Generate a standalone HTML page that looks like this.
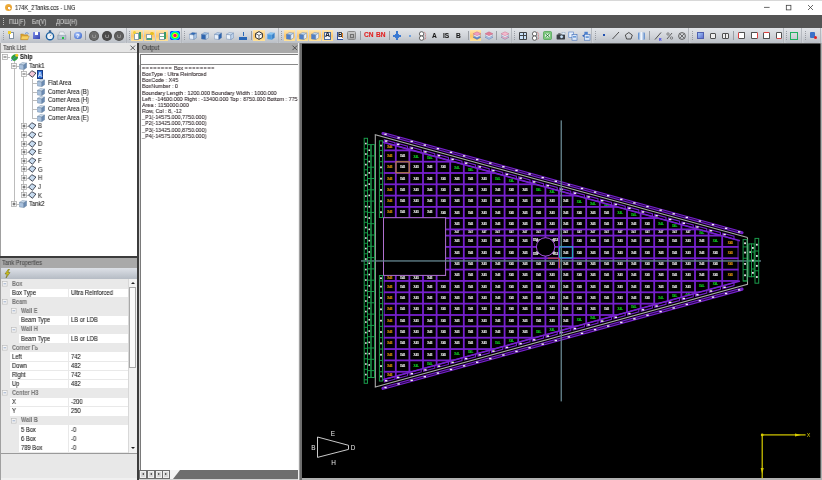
<!DOCTYPE html>
<html><head><meta charset="utf-8"><style>
html,body{margin:0;padding:0;}
body{width:822px;height:480px;overflow:hidden;position:relative;background:#f0f0f0;font-family:"Liberation Sans",sans-serif;}
.a{position:absolute;}
.t{position:absolute;white-space:nowrap;will-change:transform;-webkit-text-stroke:0.08px currentColor;font-size:5.6px;line-height:8px;color:#202020;}
#title{left:0;top:0;width:822px;height:15px;background:#fff;border-top:1px solid #d8d8d8;box-sizing:border-box;}
#menu{left:0;top:15px;width:822px;height:13px;background:#545454;}
#tbar{left:0;top:28px;width:822px;height:14.5px;background:linear-gradient(#e2e4e8,#c9cdd3);}
.tb{position:absolute;top:28px;height:14.5px;background:linear-gradient(#e6e8eb,#cbcfd5);border-radius:2px;}
.sep{position:absolute;top:31px;width:1px;height:9px;background:#a4a8ae;}
.grip{position:absolute;top:31px;width:1px;height:9px;background:repeating-linear-gradient(#70747a 0 1px,transparent 1px 2px);}
.hl{position:absolute;top:29.8px;height:11px;background:linear-gradient(#ffe2a8,#fbc86c 50%,#ffe6a0);border-radius:1px;}
.ic{position:absolute;}
</style></head><body>
<!-- title bar -->
<div id="title" class="a"></div>
<div class="a" style="left:4.5px;top:4px;width:7px;height:7px;border-radius:50%;background:radial-gradient(circle at 60% 60%,#fff 0 1.2px,#e8a030 1.5px,#f0b848);"></div>
<div class="t" style="left:14.6px;top:3.5px;font-size:7px;color:#262626;transform:scaleX(0.8);transform-origin:0 0;-webkit-text-stroke:0.1px #262626;">174K_2Tanks.ccs - LNG</div>
<svg class="a" style="left:760px;top:2px" width="60" height="11"><line x1="4" y1="5.4" x2="9.6" y2="5.4" stroke="#383838" stroke-width="0.75"/><rect x="26.3" y="3.3" width="4.6" height="4.6" fill="none" stroke="#383838" stroke-width="0.75"/><line x1="48" y1="3" x2="53" y2="8" stroke="#383838" stroke-width="0.75"/><line x1="53" y1="3" x2="48" y2="8" stroke="#383838" stroke-width="0.75"/></svg>
<!-- menu bar -->
<div id="menu" class="a"></div>
<div class="a" style="left:3px;top:18px;width:1px;height:8px;background:repeating-linear-gradient(#bdbdbd 0 1px,transparent 1px 2px);"></div>
<div class="t" style="left:8.5px;top:18.2px;color:#d4d4d4;font-size:6.4px;transform:scaleX(0.88);transform-origin:0 0;">&#x41F;&#x428;(F)</div>
<div class="t" style="left:32px;top:18.2px;color:#d4d4d4;font-size:6.4px;transform:scaleX(0.88);transform-origin:0 0;">&#x411;&#x43B;(V)</div>
<div class="t" style="left:56px;top:18.2px;color:#d4d4d4;font-size:6.4px;transform:scaleX(0.88);transform-origin:0 0;">&#x414;&#x41E;&#x428;(H)</div>
<!-- toolbar -->
<div id="tbar" class="a"></div>
<div class="a" style="left:1px;top:28px;width:124.8px;height:14.5px;background:linear-gradient(#e2e5e9,#d2d5da 50%,#babfc6);border-radius:2px;"></div>
<div class="a" style="left:125.7px;top:28px;width:0.8px;height:14.5px;background:#b4b8be;"></div>
<div class="a" style="left:2.7px;top:31px;width:1px;height:9px;background:repeating-linear-gradient(#868a92 0 1px,transparent 1px 2px);opacity:0.75;"></div>
<div class="a" style="left:127px;top:28px;width:53.7px;height:14.5px;background:linear-gradient(#e2e5e9,#d2d5da 50%,#babfc6);border-radius:2px;"></div>
<div class="a" style="left:180.6px;top:28px;width:0.8px;height:14.5px;background:#b4b8be;"></div>
<div class="a" style="left:128.7px;top:31px;width:1px;height:9px;background:repeating-linear-gradient(#868a92 0 1px,transparent 1px 2px);opacity:0.75;"></div>
<div class="a" style="left:182px;top:28px;width:95.7px;height:14.5px;background:linear-gradient(#e2e5e9,#d2d5da 50%,#babfc6);border-radius:2px;"></div>
<div class="a" style="left:277.6px;top:28px;width:0.8px;height:14.5px;background:#b4b8be;"></div>
<div class="a" style="left:183.7px;top:31px;width:1px;height:9px;background:repeating-linear-gradient(#868a92 0 1px,transparent 1px 2px);opacity:0.75;"></div>
<div class="a" style="left:279px;top:28px;width:231.8px;height:14.5px;background:linear-gradient(#e2e5e9,#d2d5da 50%,#babfc6);border-radius:2px;"></div>
<div class="a" style="left:510.7px;top:28px;width:0.8px;height:14.5px;background:#b4b8be;"></div>
<div class="a" style="left:280.7px;top:31px;width:1px;height:9px;background:repeating-linear-gradient(#868a92 0 1px,transparent 1px 2px);opacity:0.75;"></div>
<div class="a" style="left:512px;top:28px;width:79.5px;height:14.5px;background:linear-gradient(#e2e5e9,#d2d5da 50%,#babfc6);border-radius:2px;"></div>
<div class="a" style="left:591.4px;top:28px;width:0.8px;height:14.5px;background:#b4b8be;"></div>
<div class="a" style="left:513.7px;top:31px;width:1px;height:9px;background:repeating-linear-gradient(#868a92 0 1px,transparent 1px 2px);opacity:0.75;"></div>
<div class="a" style="left:593px;top:28px;width:95.5px;height:14.5px;background:linear-gradient(#e2e5e9,#d2d5da 50%,#babfc6);border-radius:2px;"></div>
<div class="a" style="left:688.4px;top:28px;width:0.8px;height:14.5px;background:#b4b8be;"></div>
<div class="a" style="left:594.7px;top:31px;width:1px;height:9px;background:repeating-linear-gradient(#868a92 0 1px,transparent 1px 2px);opacity:0.75;"></div>
<div class="a" style="left:690px;top:28px;width:93.2px;height:14.5px;background:linear-gradient(#e2e5e9,#d2d5da 50%,#babfc6);border-radius:2px;"></div>
<div class="a" style="left:783.1px;top:28px;width:0.8px;height:14.5px;background:#b4b8be;"></div>
<div class="a" style="left:691.7px;top:31px;width:1px;height:9px;background:repeating-linear-gradient(#868a92 0 1px,transparent 1px 2px);opacity:0.75;"></div>
<div class="a" style="left:784.5px;top:28px;width:17px;height:14.5px;background:linear-gradient(#e2e5e9,#d2d5da 50%,#babfc6);border-radius:2px;"></div>
<div class="a" style="left:801.4px;top:28px;width:0.8px;height:14.5px;background:#b4b8be;"></div>
<div class="a" style="left:786.2px;top:31px;width:1px;height:9px;background:repeating-linear-gradient(#868a92 0 1px,transparent 1px 2px);opacity:0.75;"></div>
<div class="a" style="left:803px;top:28px;width:17px;height:14.5px;background:linear-gradient(#e2e5e9,#d2d5da 50%,#babfc6);border-radius:2px;"></div>
<div class="a" style="left:819.9px;top:28px;width:0.8px;height:14.5px;background:#b4b8be;"></div>
<div class="a" style="left:804.7px;top:31px;width:1px;height:9px;background:repeating-linear-gradient(#868a92 0 1px,transparent 1px 2px);opacity:0.75;"></div>
<div class="a" style="left:69.7px;top:31px;width:0.8px;height:9px;background:#9a9ea4;"></div>
<div class="a" style="left:85.4px;top:31px;width:0.8px;height:9px;background:#9a9ea4;"></div>
<div class="a" style="left:250.5px;top:31px;width:0.8px;height:9px;background:#9a9ea4;"></div>
<div class="a" style="left:359.5px;top:31px;width:0.8px;height:9px;background:#9a9ea4;"></div>
<div class="a" style="left:388.7px;top:31px;width:0.8px;height:9px;background:#9a9ea4;"></div>
<div class="a" style="left:467.5px;top:31px;width:0.8px;height:9px;background:#9a9ea4;"></div>
<div class="a" style="left:495.7px;top:31px;width:0.8px;height:9px;background:#9a9ea4;"></div>
<div class="a" style="left:649px;top:31px;width:0.8px;height:9px;background:#9a9ea4;"></div>
<div class="a" style="left:733px;top:31px;width:0.8px;height:9px;background:#9a9ea4;"></div>
<div class="a" style="left:131.3px;top:29.8px;width:11.7px;height:11px;background:linear-gradient(#ffe7b0,#fcc66a 55%,#ffe49c);"></div>
<div class="a" style="left:143.5px;top:29.8px;width:11.5px;height:11px;background:linear-gradient(#ffe7b0,#fcc66a 55%,#ffe49c);"></div>
<div class="a" style="left:156px;top:29.8px;width:11.7px;height:11px;background:linear-gradient(#ffe7b0,#fcc66a 55%,#ffe49c);"></div>
<div class="a" style="left:253px;top:29.8px;width:12px;height:11px;background:linear-gradient(#ffe7b0,#fcc66a 55%,#ffe49c);"></div>
<div class="a" style="left:284px;top:29.8px;width:11px;height:11px;background:linear-gradient(#ffe7b0,#fcc66a 55%,#ffe49c);"></div>
<div class="a" style="left:296.5px;top:29.8px;width:11.5px;height:11px;background:linear-gradient(#ffe7b0,#fcc66a 55%,#ffe49c);"></div>
<div class="a" style="left:309px;top:29.8px;width:11.5px;height:11px;background:linear-gradient(#ffe7b0,#fcc66a 55%,#ffe49c);"></div>
<div class="a" style="left:321.5px;top:29.8px;width:11.5px;height:11px;background:linear-gradient(#ffe7b0,#fcc66a 55%,#ffe49c);"></div>
<div class="a" style="left:470px;top:29.8px;width:11px;height:11px;background:linear-gradient(#ffe7b0,#fcc66a 55%,#ffe49c);"></div>
<div class="a" style="left:8.5px;top:31.5px;width:5.5px;height:7px;background:#fff;border:0.6px solid #8090a0;box-sizing:border-box;"></div>
<div class="a" style="left:8px;top:31px;width:3px;height:3px;background:#f0d030;"></div>
<svg class="a" style="left:19.5px;top:30.5px" width="10" height="10" viewBox="0 0 10 10"><path d="M0.8 3 L3.2 3 L4 3.8 L7.6 3.8 L7.6 8.6 L0.8 8.6 Z" fill="#e0a830" stroke="#a07020" stroke-width="0.4"/><path d="M1.6 5 L9.2 5 L7.8 8.6 L0.8 8.6 Z" fill="#f8d060" stroke="#b88020" stroke-width="0.4"/><path d="M5 2.6 Q7 0.6 8.6 2.6" fill="none" stroke="#3a7ad0" stroke-width="0.7"/></svg>
<div class="a" style="left:33px;top:31.5px;width:7px;height:7px;background:linear-gradient(135deg,#8090e8,#3040b0);border-radius:0.5px;"></div>
<div class="a" style="left:35px;top:32px;width:3px;height:2.5px;background:#fff;"></div>
<svg class="a" style="left:44.5px;top:30px" width="10" height="11" viewBox="0 0 10 11"><rect x="3.8" y="0.4" width="2.4" height="1.4" fill="#1a4a80"/><circle cx="5" cy="6.2" r="3.6" fill="#f0f4f8" stroke="#1a5fa0" stroke-width="1.4"/><line x1="5" y1="6.2" x2="6.4" y2="4.6" stroke="#404040" stroke-width="0.5"/></svg>
<svg class="a" style="left:56.5px;top:30.5px" width="10" height="10" viewBox="0 0 10 10"><path d="M2.5 1 L7 1 L7.5 4 L2 4 Z" fill="#f4f6f8" stroke="#8090a0" stroke-width="0.4"/><path d="M0.8 4 L8.8 4 L8.8 8.4 L0.8 8.4 Z" fill="#b8c4d0" stroke="#708090" stroke-width="0.4"/><path d="M2 4 L7.5 4 L8.5 2.8 L3 2.8 Z" fill="#e0e6ec"/></svg>
<div class="a" style="left:62px;top:36.5px;width:2px;height:2px;background:#20c040;"></div>
<div class="a" style="left:74px;top:31.5px;width:7.5px;height:7.5px;background:radial-gradient(circle at 40% 35%,#b8d0ff,#2050c0);border-radius:50%;"></div>
<div class="t" style="left:75.9px;top:31.6px;font-size:6px;font-weight:bold;color:#fff;-webkit-text-stroke:0;">?</div>
<div class="a" style="left:89px;top:30.5px;width:10px;height:10px;background:radial-gradient(circle,#6a6a6a 0 55%,#3a3a3a 75%,#6a6a6a);border-radius:50%;"></div>
<div class="a" style="left:92px;top:33.5px;width:4px;height:4px;border:1px solid #9a9a9a;border-radius:50%;border-top-color:transparent;box-sizing:border-box;"></div>
<div class="a" style="left:102px;top:30.5px;width:10px;height:10px;background:radial-gradient(circle,#4a4a4a 0 55%,#3a3a3a 75%,#6a6a6a);border-radius:50%;"></div>
<div class="a" style="left:105px;top:33.5px;width:4px;height:4px;border:1px solid #9a9a9a;border-radius:50%;border-top-color:transparent;box-sizing:border-box;"></div>
<div class="a" style="left:114px;top:30.5px;width:10px;height:10px;background:radial-gradient(circle,#5e5e5e 0 55%,#3a3a3a 75%,#6a6a6a);border-radius:50%;"></div>
<div class="a" style="left:117px;top:33.5px;width:4px;height:4px;border:1px solid #9a9a9a;border-radius:50%;border-top-color:transparent;box-sizing:border-box;"></div>
<div class="a" style="left:134px;top:32.5px;width:5px;height:7px;background:#fff;border:0.5px solid #90a0a8;box-sizing:border-box;"></div>
<div class="a" style="left:138.5px;top:32px;width:2px;height:7px;background:#3a9a6a;"></div>
<div class="a" style="left:133px;top:31px;width:3px;height:3px;background:#f4d030;border-radius:50%;"></div>
<div class="a" style="left:146px;top:34px;width:6px;height:5.5px;background:#fff;border:0.5px solid #90a0a8;box-sizing:border-box;"></div>
<div class="a" style="left:146.5px;top:38px;width:5px;height:1.5px;background:#50a080;"></div>
<div class="a" style="left:150px;top:31.5px;width:4px;height:3.5px;background:#e8c020;border-radius:50%;"></div>
<div class="a" style="left:159px;top:32.5px;width:6px;height:7px;background:#fff;border:0.5px solid #90a0a8;box-sizing:border-box;"></div>
<div class="a" style="left:164px;top:32px;width:2px;height:7px;background:#3a9a6a;"></div>
<div class="a" style="left:159.5px;top:35.5px;width:4px;height:1px;background:#70b090;"></div>
<div class="a" style="left:169.5px;top:30.5px;width:10px;height:9.5px;background:radial-gradient(ellipse at 50% 50%,#ff0080 0 18%,#ffff00 30%,#00ff40 45%,#00e0ff 62%,#0020ff 78%);border-radius:2px;"></div>
<svg class="a" style="left:188.5px;top:31.5px" width="8" height="8" viewBox="0 0 8 8"><polygon points="0.4,2.4 3.4,0.5 7.6,1.1 4.8,3.0" fill="#2f6ab8" stroke="#5a7ca8" stroke-width="0.4"/><polygon points="0.4,2.4 4.8,3.0 4.8,7.6 0.4,6.9" fill="#e8f0fa" stroke="#5a7ca8" stroke-width="0.4"/><polygon points="4.8,3.0 7.6,1.1 7.6,5.8 4.8,7.6" fill="#a8c4e4" stroke="#5a7ca8" stroke-width="0.4"/></svg>
<svg class="a" style="left:201px;top:31.5px" width="8" height="8" viewBox="0 0 8 8"><polygon points="0.4,2.4 3.4,0.5 7.6,1.1 4.8,3.0" fill="#9cc0e8" stroke="#5a7ca8" stroke-width="0.4"/><polygon points="0.4,2.4 4.8,3.0 4.8,7.6 0.4,6.9" fill="#2c64b0" stroke="#5a7ca8" stroke-width="0.4"/><polygon points="4.8,3.0 7.6,1.1 7.6,5.8 4.8,7.6" fill="#c8dcf0" stroke="#5a7ca8" stroke-width="0.4"/></svg>
<svg class="a" style="left:213.5px;top:31.5px" width="8" height="8" viewBox="0 0 8 8"><polygon points="0.4,2.4 3.4,0.5 7.6,1.1 4.8,3.0" fill="#b8d0ec" stroke="#5a7ca8" stroke-width="0.4"/><polygon points="0.4,2.4 4.8,3.0 4.8,7.6 0.4,6.9" fill="#e8f0fa" stroke="#5a7ca8" stroke-width="0.4"/><polygon points="4.8,3.0 7.6,1.1 7.6,5.8 4.8,7.6" fill="#2c64b0" stroke="#5a7ca8" stroke-width="0.4"/></svg>
<svg class="a" style="left:226px;top:31.5px" width="8" height="8" viewBox="0 0 8 8"><polygon points="0.4,2.4 3.4,0.5 7.6,1.1 4.8,3.0" fill="#d0e0f2" stroke="#5a7ca8" stroke-width="0.4"/><polygon points="0.4,2.4 4.8,3.0 4.8,7.6 0.4,6.9" fill="#eef4fb" stroke="#5a7ca8" stroke-width="0.4"/><polygon points="4.8,3.0 7.6,1.1 7.6,5.8 4.8,7.6" fill="#c0d4ec" stroke="#5a7ca8" stroke-width="0.4"/></svg>
<div class="a" style="left:239px;top:31.5px;width:8px;height:8px;background:linear-gradient(transparent 0 60%,#2a68b8 60%);"></div>
<div class="a" style="left:242.5px;top:31.5px;width:1px;height:4px;background:#2a68b8;"></div>
<svg class="a" style="left:255px;top:31px" width="8" height="9" viewBox="0 0 8 9"><polygon points="4,0.6 7.4,2.5 7.4,6.5 4,8.4 0.6,6.5 0.6,2.5" fill="#fff" stroke="#303030" stroke-width="1"/><polyline points="0.8,2.6 4,4.4 7.2,2.6" fill="none" stroke="#303030" stroke-width="0.7"/><line x1="4" y1="4.4" x2="4" y2="8.2" stroke="#303030" stroke-width="0.7"/></svg>
<svg class="a" style="left:267px;top:31.5px" width="8" height="8" viewBox="0 0 8 8"><polygon points="0.4,2.4 3.4,0.5 7.6,1.1 4.8,3.0" fill="#8cc8f4" stroke="#6aa8e0" stroke-width="0.4"/><polygon points="0.4,2.4 4.8,3.0 4.8,7.6 0.4,6.9" fill="#4a9ae0" stroke="#6aa8e0" stroke-width="0.4"/><polygon points="4.8,3.0 7.6,1.1 7.6,5.8 4.8,7.6" fill="#3a80c8" stroke="#6aa8e0" stroke-width="0.4"/></svg>
<svg class="a" style="left:286px;top:31.5px" width="8" height="8" viewBox="0 0 8 8"><polygon points="0.4,2.4 3.4,0.5 7.6,1.1 4.8,3.0" fill="#c0d8f0" stroke="#5a7ca8" stroke-width="0.4"/><polygon points="0.4,2.4 4.8,3.0 4.8,7.6 0.4,6.9" fill="#5080c8" stroke="#5a7ca8" stroke-width="0.4"/><polygon points="4.8,3.0 7.6,1.1 7.6,5.8 4.8,7.6" fill="#e8f0fa" stroke="#5a7ca8" stroke-width="0.4"/></svg>
<svg class="a" style="left:298.5px;top:31.5px" width="8" height="8" viewBox="0 0 8 8"><polygon points="0.4,2.4 3.4,0.5 7.6,1.1 4.8,3.0" fill="#c0d8f0" stroke="#5a7ca8" stroke-width="0.4"/><polygon points="0.4,2.4 4.8,3.0 4.8,7.6 0.4,6.9" fill="#5080c8" stroke="#5a7ca8" stroke-width="0.4"/><polygon points="4.8,3.0 7.6,1.1 7.6,5.8 4.8,7.6" fill="#e8f0fa" stroke="#5a7ca8" stroke-width="0.4"/></svg>
<svg class="a" style="left:311px;top:31.5px" width="8" height="8" viewBox="0 0 8 8"><polygon points="0.4,2.4 3.4,0.5 7.6,1.1 4.8,3.0" fill="#c0d8f0" stroke="#5a7ca8" stroke-width="0.4"/><polygon points="0.4,2.4 4.8,3.0 4.8,7.6 0.4,6.9" fill="#5080c8" stroke="#5a7ca8" stroke-width="0.4"/><polygon points="4.8,3.0 7.6,1.1 7.6,5.8 4.8,7.6" fill="#e8f0fa" stroke="#5a7ca8" stroke-width="0.4"/></svg>
<div class="a" style="left:323.5px;top:31.5px;width:7.5px;height:8px;background:#f0f4fa;border:0.7px solid #5070a0;box-sizing:border-box;"></div>
<div class="t" style="left:324.6px;top:31px;font-size:7px;font-weight:bold;color:#202838;">A</div>
<div class="a" style="left:336.5px;top:32px;width:6.5px;height:8px;background:#f4f6fa;border-left:0.8px solid #3050a0;border-bottom:0.8px solid #3050a0;box-sizing:border-box;"></div>
<div class="t" style="left:337.6px;top:31.2px;font-size:6.5px;font-weight:bold;color:#181818;">B</div>
<div class="a" style="left:341.5px;top:33px;width:1.2px;height:5px;background:#e08020;"></div>
<div class="a" style="left:347px;top:31px;width:9px;height:9px;background:linear-gradient(#c8c8c8,#a8a8a8);border:0.8px solid #8a8a8a;border-radius:1.5px;box-sizing:border-box;"></div>
<div class="a" style="left:349.5px;top:33.5px;width:4px;height:4px;border:0.6px solid #707070;box-sizing:border-box;"></div>
<div class="t" style="left:364px;top:31.3px;font-size:6.6px;font-weight:bold;color:#e02020;">CN</div>
<div class="t" style="left:376px;top:31.3px;font-size:6.6px;font-weight:bold;color:#e02020;">BN</div>
<div class="a" style="left:393px;top:31.5px;width:8px;height:8px;background:radial-gradient(circle,#3a80e0 0 40%,transparent 45%);"></div>
<div class="a" style="left:396px;top:31px;width:2px;height:9px;background:#3a78d0;"></div>
<div class="a" style="left:393px;top:35px;width:8px;height:2px;background:#3a78d0;"></div>
<div class="a" style="left:408.5px;top:34.8px;width:2px;height:2px;background:#5090e0;border-radius:50%;"></div>
<svg class="a" style="left:417.5px;top:30.5px" width="10" height="10" viewBox="0 0 10 10"><circle cx="3.6" cy="2.9" r="2.2" fill="#fff" stroke="#404040" stroke-width="0.8"/><circle cx="3.6" cy="7.1" r="2.2" fill="#fff" stroke="#404040" stroke-width="0.8"/><path d="M6.4 1.2 Q8.6 3 7 5 Q8.6 7 6.4 8.8" fill="none" stroke="#d04848" stroke-width="0.7" stroke-dasharray="1 0.6"/></svg>
<div class="t" style="left:431.8px;top:31.7px;font-size:6.6px;font-weight:bold;color:#181818;">A</div>
<div class="t" style="left:443.3px;top:31.7px;font-size:6.6px;font-weight:bold;color:#181818;">IS</div>
<div class="t" style="left:455.8px;top:31.7px;font-size:6.6px;font-weight:bold;color:#181818;">B</div>
<svg class="a" style="left:471.5px;top:30.5px" width="10" height="10" viewBox="0 0 10 10"><polygon points="1,6.2 5,4.2 9,6.2 5,8.4" fill="#5a8ad0" stroke="#5070a0" stroke-width="0.4"/><polygon points="1,4.4 5,2.4 9,4.4 5,6.5" fill="#e8eef8" stroke="#8090b0" stroke-width="0.4"/><polygon points="1,2.8 5,0.8 9,2.8 5,4.8" fill="#f0a0c0" stroke="#c06080" stroke-width="0.4"/></svg>
<svg class="a" style="left:483.5px;top:30.5px" width="10" height="10" viewBox="0 0 10 10"><polygon points="1,6.2 5,4.2 9,6.2 5,8.4" fill="#a8c0e8" stroke="#5070a0" stroke-width="0.4"/><polygon points="1,4.4 5,2.4 9,4.4 5,6.5" fill="#e8eef8" stroke="#8090b0" stroke-width="0.4"/><polygon points="1,2.8 5,0.8 9,2.8 5,4.8" fill="#e08098" stroke="#c06080" stroke-width="0.4"/></svg>
<svg class="a" style="left:500px;top:30.5px" width="10" height="10" viewBox="0 0 10 10"><polygon points="1,6.2 5,4.2 9,6.2 5,8.4" fill="#f0a8c0" stroke="#5070a0" stroke-width="0.4"/><polygon points="1,4.4 5,2.4 9,4.4 5,6.5" fill="#e8eef8" stroke="#8090b0" stroke-width="0.4"/><polygon points="1,2.8 5,0.8 9,2.8 5,4.8" fill="#f4b8cc" stroke="#c06080" stroke-width="0.4"/></svg>
<div class="a" style="left:519px;top:31.5px;width:8px;height:8px;background:#404448;border-radius:1px;"></div>
<div class="a" style="left:520px;top:32.5px;width:2.5px;height:2.5px;background:#c8e0f8;"></div>
<div class="a" style="left:523.5px;top:32.5px;width:2.5px;height:2.5px;background:#c8e0f8;"></div>
<div class="a" style="left:520px;top:36px;width:2.5px;height:2.5px;background:#c8e0f8;"></div>
<div class="a" style="left:523.5px;top:36px;width:2.5px;height:2.5px;background:#c8e0f8;"></div>
<svg class="a" style="left:531px;top:30.5px" width="10" height="10" viewBox="0 0 10 10"><circle cx="3.6" cy="2.9" r="2.2" fill="#fff" stroke="#404040" stroke-width="0.8"/><circle cx="3.6" cy="7.1" r="2.2" fill="#fff" stroke="#404040" stroke-width="0.8"/><path d="M6.4 1.2 Q8.6 3 7 5 Q8.6 7 6.4 8.8" fill="none" stroke="#d04848" stroke-width="0.7" stroke-dasharray="1 0.6"/></svg>
<svg class="a" style="left:543px;top:31px" width="9" height="9" viewBox="0 0 9 9"><rect x="0.5" y="0.5" width="8" height="8" rx="1" fill="#7cc87c" stroke="#3a9a40" stroke-width="0.6"/><rect x="2" y="2.6" width="5" height="3.8" fill="#e8f4e8"/><path d="M2.4 2.8 L6.6 6.2 M6.6 2.8 L2.4 6.2" stroke="#1a7a2a" stroke-width="0.9"/></svg>
<svg class="a" style="left:555.5px;top:30.5px" width="10" height="10" viewBox="0 0 10 10"><rect x="0.6" y="3.4" width="8.4" height="5" rx="0.6" fill="#3a3e44"/><rect x="2.2" y="2.4" width="2.4" height="1.2" fill="#3a3e44"/><circle cx="5.6" cy="5.8" r="1.8" fill="#c8e0f8" stroke="#202428" stroke-width="0.5"/><rect x="6" y="1.2" width="3" height="2.2" fill="#e8f0f8" stroke="#6080a0" stroke-width="0.3"/></svg>
<svg class="a" style="left:567.5px;top:30.5px" width="10" height="10" viewBox="0 0 10 10"><rect x="0.8" y="1" width="4.6" height="5.6" fill="#e8f0fa" stroke="#4a7ac8" stroke-width="0.6"/><rect x="4" y="3.6" width="5" height="5.6" fill="#dce8f8" stroke="#3a6ab8" stroke-width="0.6"/><rect x="5" y="5" width="3" height="1.6" fill="#6a9ad8"/></svg>
<svg class="a" style="left:580.5px;top:30.5px" width="10" height="10" viewBox="0 0 10 10"><rect x="3.4" y="0.8" width="3.4" height="2.6" fill="#4a80d0"/><path d="M1 4.8 L3.6 3.2 L3.6 6.4 Z" fill="#2a60c0"/><rect x="3.4" y="3.4" width="5.6" height="5.8" fill="#dce8f8" stroke="#3a6ab8" stroke-width="0.6"/><rect x="4.6" y="5.2" width="3.2" height="1.8" fill="#6a9ad8"/></svg>
<div class="a" style="left:603px;top:34.3px;width:1.5px;height:1.5px;background:#2050b0;"></div>
<svg class="a" style="left:610px;top:30px" width="80" height="12"><line x1="2.5" y1="9" x2="9" y2="2" stroke="#404040" stroke-width="0.9"/><polygon points="18.8,2.5 22.3,5 21,9 16.6,9 15.3,5" fill="none" stroke="#404040" stroke-width="0.9"/><line x1="45" y1="9.5" x2="51" y2="2.5" stroke="#404040" stroke-width="0.9"/><text x="49" y="10.5" font-size="3.6" font-family="Liberation Sans" font-weight="bold" fill="#3030f0">R</text><line x1="57" y1="9" x2="62" y2="3" stroke="#505050" stroke-width="0.9"/><circle cx="58" cy="4" r="1.2" fill="none" stroke="#505050" stroke-width="0.6"/><circle cx="61.5" cy="8" r="1.2" fill="none" stroke="#505050" stroke-width="0.6"/><circle cx="72" cy="6" r="3.4" fill="none" stroke="#505050" stroke-width="0.9"/><line x1="69.8" y1="3.8" x2="74.2" y2="8.2" stroke="#505050" stroke-width="0.8"/><line x1="74.2" y1="3.8" x2="69.8" y2="8.2" stroke="#505050" stroke-width="0.8"/></svg>
<div class="a" style="left:637.5px;top:31.5px;width:7.5px;height:8px;background:linear-gradient(90deg,#4a80c8,#fff 45%,#5a88c8);border-radius:3px/1.5px;"></div>
<div class="a" style="left:696.5px;top:32px;width:7px;height:7px;background:linear-gradient(135deg,#a0c8f8,#6070d0);border:0.6px solid #5060b0;box-sizing:border-box;"></div>
<div class="a" style="left:709.5px;top:32.5px;width:6.5px;height:6.5px;border:0.9px solid #505050;background:linear-gradient(#eee 0 45%,#505050 45% 55%,#eee 55%);box-sizing:border-box;border-radius:1px;"></div>
<div class="a" style="left:722px;top:32.5px;width:6.5px;height:6.5px;border:0.9px solid #505050;background:linear-gradient(90deg,#eee 0 45%,#505050 45% 55%,#eee 55%);box-sizing:border-box;border-radius:1px;"></div>
<div class="a" style="left:738px;top:32.3px;width:6.8px;height:6.8px;border:0.9px solid #505050;border-left:1.2px solid #e04040;background:#fff;box-sizing:border-box;border-radius:1.2px;"></div>
<div class="a" style="left:751px;top:32.3px;width:6.8px;height:6.8px;border:0.9px solid #505050;border-right:1.2px solid #e04040;background:#fff;box-sizing:border-box;border-radius:1.2px;"></div>
<div class="a" style="left:763px;top:32.3px;width:6.8px;height:6.8px;border:0.9px solid #505050;border-top:1.2px solid #e04040;background:#fff;box-sizing:border-box;border-radius:1.2px;"></div>
<div class="a" style="left:775.5px;top:32.3px;width:6.8px;height:6.8px;border:0.9px solid #505050;border-bottom:1.2px solid #e04040;background:#fff;box-sizing:border-box;border-radius:1.2px;"></div>
<div class="a" style="left:790px;top:31.5px;width:8px;height:8px;border:1.4px solid #20b060;background:transparent;box-sizing:border-box;"></div>
<div class="a" style="left:810px;top:31.5px;width:5px;height:6px;background:#3a70c8;border-radius:1px;"></div>
<div class="a" style="left:813.5px;top:35.5px;width:3.5px;height:3.5px;background:#e02020;border-radius:50%;"></div>

<!-- separator below toolbar -->
<div class="a" style="left:0;top:42.5px;width:822px;height:1px;background:#d0d0d0;"></div>

<!-- LEFT PANEL: Tank List -->
<div class="a" style="left:0;top:43px;width:137px;height:437px;background:#f0f0f0;"></div>
<div class="a" style="left:0;top:43px;width:1px;height:437px;background:#a0a0a0;"></div>
<div class="a" style="left:1px;top:43px;width:136px;height:9.5px;background:#e6e6e6;border-bottom:1px solid #b8b8b8;box-sizing:border-box;"></div>
<div class="t" style="left:2.5px;top:44px;color:#383838;font-size:6.4px;transform:scaleX(0.9);transform-origin:0 0;">Tank List</div>
<svg class="a" style="left:128.5px;top:44px" width="8" height="8"><line x1="1.5" y1="1.6" x2="6" y2="6.1" stroke="#3a3a3a" stroke-width="0.8"/><line x1="6" y1="1.6" x2="1.5" y2="6.1" stroke="#3a3a3a" stroke-width="0.8"/></svg>
<div class="a" style="left:1px;top:52.5px;width:136px;height:203.5px;background:#fff;"></div>
<div class="a" style="left:14.3px;top:61px;width:0.7px;height:143px;background:#bcbcbc;"></div>
<div class="a" style="left:23.3px;top:70px;width:0.7px;height:125.5px;background:#bcbcbc;"></div>
<div class="a" style="left:32.4px;top:79px;width:0.7px;height:38.5px;background:#bcbcbc;"></div>
<div class="a" style="left:5.2px;top:57px;width:5px;height:0.7px;background:#bcbcbc;"></div>
<svg class="a" style="left:2.2px;top:54px" width="6" height="6" viewBox="0 0 6 6"><rect x="0.5" y="0.5" width="5" height="5" fill="#fafafa" stroke="#a4a4a4" stroke-width="0.7"/><line x1="1.5" y1="3" x2="4.5" y2="3" stroke="#303030" stroke-width="0.8"/></svg>
<svg class="a" style="left:9.5px;top:52.5px" width="9" height="9" viewBox="0 0 9 9"><ellipse cx="4.6" cy="4.6" rx="3.4" ry="3" transform="rotate(-35 4.6 4.6)" fill="#2aa040"/><path d="M1 7.8 Q4 6 8 1.2" stroke="#4a7ad0" stroke-width="0.8" fill="none"/><circle cx="6.8" cy="2.2" r="1.5" fill="#f0c820"/></svg>
<div class="t" style="left:19.8px;top:53.2px;font-weight:bold;font-size:6.6px;color:#181818;transform:scaleX(0.88);transform-origin:0 0;">Ship</div>
<div class="a" style="left:14.4px;top:65.65px;width:5px;height:0.7px;background:#bcbcbc;"></div>
<svg class="a" style="left:11.4px;top:62.65px" width="6" height="6" viewBox="0 0 6 6"><rect x="0.5" y="0.5" width="5" height="5" fill="#fafafa" stroke="#a4a4a4" stroke-width="0.7"/><line x1="1.5" y1="3" x2="4.5" y2="3" stroke="#303030" stroke-width="0.8"/></svg>
<svg class="a" style="left:19.3px;top:61.85px" width="8" height="8" viewBox="0 0 8 8"><polygon points="0.4,2.4 3.4,0.5 7.6,1.1 4.8,3.0" fill="#c8d8ea" stroke="#5a7898" stroke-width="0.4"/><polygon points="0.4,2.4 4.8,3.0 4.8,7.6 0.4,6.9" fill="#a8c0dc" stroke="#5a7898" stroke-width="0.4"/><polygon points="4.8,3.0 7.6,1.1 7.6,5.8 4.8,7.6" fill="#6c8cb4" stroke="#5a7898" stroke-width="0.4"/></svg>
<div class="t" style="left:29px;top:61.85px;font-size:6.6px;color:#161616;transform:scaleX(0.88);transform-origin:0 0;">Tank1</div>
<div class="a" style="left:23.6px;top:74.3px;width:5px;height:0.7px;background:#bcbcbc;"></div>
<svg class="a" style="left:20.6px;top:71.3px" width="6" height="6" viewBox="0 0 6 6"><rect x="0.5" y="0.5" width="5" height="5" fill="#fafafa" stroke="#a4a4a4" stroke-width="0.7"/><line x1="1.5" y1="3" x2="4.5" y2="3" stroke="#303030" stroke-width="0.8"/></svg>
<svg class="a" style="left:28px;top:70.3px" width="8.5" height="8" viewBox="0 0 8.5 8"><polygon points="0.6,4.2 3.8,0.7 7.9,3 4.5,7.3" fill="#f4c8d8" stroke="#2a3040" stroke-width="0.85"/></svg>
<div class="a" style="left:37.3px;top:69.7px;width:6px;height:9.2px;background:#2f72dc;border:0.6px solid #1a3a80;box-sizing:border-box;"></div>
<div class="t" style="left:38.3px;top:70.5px;font-size:6.6px;color:#fff;transform:scaleX(0.88);transform-origin:0 0;">A</div>
<div class="a" style="left:32.4px;top:82.95px;width:4.5px;height:0.7px;background:#bcbcbc;"></div>
<svg class="a" style="left:37.2px;top:79.15px" width="8" height="8" viewBox="0 0 8 8"><polygon points="0.4,2.4 3.4,0.5 7.6,1.1 4.8,3.0" fill="#d0deee" stroke="#5a7898" stroke-width="0.4"/><polygon points="0.4,2.4 4.8,3.0 4.8,7.6 0.4,6.9" fill="#a8c0dc" stroke="#5a7898" stroke-width="0.4"/><polygon points="4.8,3.0 7.6,1.1 7.6,5.8 4.8,7.6" fill="#6c8cb4" stroke="#5a7898" stroke-width="0.4"/></svg>
<div class="t" style="left:47.6px;top:79.15px;font-size:6.6px;color:#161616;transform:scaleX(0.88);transform-origin:0 0;">Flat Area</div>
<div class="a" style="left:32.4px;top:91.6px;width:4.5px;height:0.7px;background:#bcbcbc;"></div>
<svg class="a" style="left:37.2px;top:87.8px" width="8" height="8" viewBox="0 0 8 8"><polygon points="0.4,2.4 3.4,0.5 7.6,1.1 4.8,3.0" fill="#d0deee" stroke="#5a7898" stroke-width="0.4"/><polygon points="0.4,2.4 4.8,3.0 4.8,7.6 0.4,6.9" fill="#a8c0dc" stroke="#5a7898" stroke-width="0.4"/><polygon points="4.8,3.0 7.6,1.1 7.6,5.8 4.8,7.6" fill="#6c8cb4" stroke="#5a7898" stroke-width="0.4"/></svg>
<div class="t" style="left:47.6px;top:87.8px;font-size:6.6px;color:#161616;transform:scaleX(0.88);transform-origin:0 0;">Corner Area (B)</div>
<div class="a" style="left:32.4px;top:100.25px;width:4.5px;height:0.7px;background:#bcbcbc;"></div>
<svg class="a" style="left:37.2px;top:96.45px" width="8" height="8" viewBox="0 0 8 8"><polygon points="0.4,2.4 3.4,0.5 7.6,1.1 4.8,3.0" fill="#d0deee" stroke="#5a7898" stroke-width="0.4"/><polygon points="0.4,2.4 4.8,3.0 4.8,7.6 0.4,6.9" fill="#a8c0dc" stroke="#5a7898" stroke-width="0.4"/><polygon points="4.8,3.0 7.6,1.1 7.6,5.8 4.8,7.6" fill="#6c8cb4" stroke="#5a7898" stroke-width="0.4"/></svg>
<div class="t" style="left:47.6px;top:96.45px;font-size:6.6px;color:#161616;transform:scaleX(0.88);transform-origin:0 0;">Corner Area (H)</div>
<div class="a" style="left:32.4px;top:108.9px;width:4.5px;height:0.7px;background:#bcbcbc;"></div>
<svg class="a" style="left:37.2px;top:105.1px" width="8" height="8" viewBox="0 0 8 8"><polygon points="0.4,2.4 3.4,0.5 7.6,1.1 4.8,3.0" fill="#d0deee" stroke="#5a7898" stroke-width="0.4"/><polygon points="0.4,2.4 4.8,3.0 4.8,7.6 0.4,6.9" fill="#a8c0dc" stroke="#5a7898" stroke-width="0.4"/><polygon points="4.8,3.0 7.6,1.1 7.6,5.8 4.8,7.6" fill="#6c8cb4" stroke="#5a7898" stroke-width="0.4"/></svg>
<div class="t" style="left:47.6px;top:105.1px;font-size:6.6px;color:#161616;transform:scaleX(0.88);transform-origin:0 0;">Corner Area (D)</div>
<div class="a" style="left:32.4px;top:117.55px;width:4.5px;height:0.7px;background:#bcbcbc;"></div>
<svg class="a" style="left:37.2px;top:113.75px" width="8" height="8" viewBox="0 0 8 8"><polygon points="0.4,2.4 3.4,0.5 7.6,1.1 4.8,3.0" fill="#d0deee" stroke="#5a7898" stroke-width="0.4"/><polygon points="0.4,2.4 4.8,3.0 4.8,7.6 0.4,6.9" fill="#a8c0dc" stroke="#5a7898" stroke-width="0.4"/><polygon points="4.8,3.0 7.6,1.1 7.6,5.8 4.8,7.6" fill="#6c8cb4" stroke="#5a7898" stroke-width="0.4"/></svg>
<div class="t" style="left:47.6px;top:113.75px;font-size:6.6px;color:#161616;transform:scaleX(0.88);transform-origin:0 0;">Corner Area (E)</div>
<div class="a" style="left:23.6px;top:126.2px;width:5px;height:0.7px;background:#bcbcbc;"></div>
<svg class="a" style="left:20.6px;top:123.2px" width="6" height="6" viewBox="0 0 6 6"><rect x="0.5" y="0.5" width="5" height="5" fill="#fafafa" stroke="#a4a4a4" stroke-width="0.7"/><line x1="1.5" y1="3" x2="4.5" y2="3" stroke="#303030" stroke-width="0.8"/><line x1="3" y1="1.5" x2="3" y2="4.5" stroke="#303030" stroke-width="0.8"/></svg>
<svg class="a" style="left:28px;top:122.2px" width="8.5" height="8" viewBox="0 0 8.5 8"><polygon points="0.6,4.2 3.8,0.7 7.9,3 4.5,7.3" fill="#c8dcf0" stroke="#2a3040" stroke-width="0.85"/></svg>
<div class="t" style="left:38px;top:122.4px;font-size:6.6px;color:#161616;transform:scaleX(0.88);transform-origin:0 0;">B</div>
<div class="a" style="left:23.6px;top:134.85px;width:5px;height:0.7px;background:#bcbcbc;"></div>
<svg class="a" style="left:20.6px;top:131.85px" width="6" height="6" viewBox="0 0 6 6"><rect x="0.5" y="0.5" width="5" height="5" fill="#fafafa" stroke="#a4a4a4" stroke-width="0.7"/><line x1="1.5" y1="3" x2="4.5" y2="3" stroke="#303030" stroke-width="0.8"/><line x1="3" y1="1.5" x2="3" y2="4.5" stroke="#303030" stroke-width="0.8"/></svg>
<svg class="a" style="left:28px;top:130.85px" width="8.5" height="8" viewBox="0 0 8.5 8"><polygon points="0.6,4.2 3.8,0.7 7.9,3 4.5,7.3" fill="#c8dcf0" stroke="#2a3040" stroke-width="0.85"/></svg>
<div class="t" style="left:38px;top:131.05px;font-size:6.6px;color:#161616;transform:scaleX(0.88);transform-origin:0 0;">C</div>
<div class="a" style="left:23.6px;top:143.5px;width:5px;height:0.7px;background:#bcbcbc;"></div>
<svg class="a" style="left:20.6px;top:140.5px" width="6" height="6" viewBox="0 0 6 6"><rect x="0.5" y="0.5" width="5" height="5" fill="#fafafa" stroke="#a4a4a4" stroke-width="0.7"/><line x1="1.5" y1="3" x2="4.5" y2="3" stroke="#303030" stroke-width="0.8"/><line x1="3" y1="1.5" x2="3" y2="4.5" stroke="#303030" stroke-width="0.8"/></svg>
<svg class="a" style="left:28px;top:139.5px" width="8.5" height="8" viewBox="0 0 8.5 8"><polygon points="0.6,4.2 3.8,0.7 7.9,3 4.5,7.3" fill="#c8dcf0" stroke="#2a3040" stroke-width="0.85"/></svg>
<div class="t" style="left:38px;top:139.7px;font-size:6.6px;color:#161616;transform:scaleX(0.88);transform-origin:0 0;">D</div>
<div class="a" style="left:23.6px;top:152.15px;width:5px;height:0.7px;background:#bcbcbc;"></div>
<svg class="a" style="left:20.6px;top:149.15px" width="6" height="6" viewBox="0 0 6 6"><rect x="0.5" y="0.5" width="5" height="5" fill="#fafafa" stroke="#a4a4a4" stroke-width="0.7"/><line x1="1.5" y1="3" x2="4.5" y2="3" stroke="#303030" stroke-width="0.8"/><line x1="3" y1="1.5" x2="3" y2="4.5" stroke="#303030" stroke-width="0.8"/></svg>
<svg class="a" style="left:28px;top:148.15px" width="8.5" height="8" viewBox="0 0 8.5 8"><polygon points="0.6,4.2 3.8,0.7 7.9,3 4.5,7.3" fill="#c8dcf0" stroke="#2a3040" stroke-width="0.85"/></svg>
<div class="t" style="left:38px;top:148.35px;font-size:6.6px;color:#161616;transform:scaleX(0.88);transform-origin:0 0;">E</div>
<div class="a" style="left:23.6px;top:160.8px;width:5px;height:0.7px;background:#bcbcbc;"></div>
<svg class="a" style="left:20.6px;top:157.8px" width="6" height="6" viewBox="0 0 6 6"><rect x="0.5" y="0.5" width="5" height="5" fill="#fafafa" stroke="#a4a4a4" stroke-width="0.7"/><line x1="1.5" y1="3" x2="4.5" y2="3" stroke="#303030" stroke-width="0.8"/><line x1="3" y1="1.5" x2="3" y2="4.5" stroke="#303030" stroke-width="0.8"/></svg>
<svg class="a" style="left:28px;top:156.8px" width="8.5" height="8" viewBox="0 0 8.5 8"><polygon points="0.6,4.2 3.8,0.7 7.9,3 4.5,7.3" fill="#c8dcf0" stroke="#2a3040" stroke-width="0.85"/></svg>
<div class="t" style="left:38px;top:157px;font-size:6.6px;color:#161616;transform:scaleX(0.88);transform-origin:0 0;">F</div>
<div class="a" style="left:23.6px;top:169.45px;width:5px;height:0.7px;background:#bcbcbc;"></div>
<svg class="a" style="left:20.6px;top:166.45px" width="6" height="6" viewBox="0 0 6 6"><rect x="0.5" y="0.5" width="5" height="5" fill="#fafafa" stroke="#a4a4a4" stroke-width="0.7"/><line x1="1.5" y1="3" x2="4.5" y2="3" stroke="#303030" stroke-width="0.8"/><line x1="3" y1="1.5" x2="3" y2="4.5" stroke="#303030" stroke-width="0.8"/></svg>
<svg class="a" style="left:28px;top:165.45px" width="8.5" height="8" viewBox="0 0 8.5 8"><polygon points="0.6,4.2 3.8,0.7 7.9,3 4.5,7.3" fill="#c8dcf0" stroke="#2a3040" stroke-width="0.85"/></svg>
<div class="t" style="left:38px;top:165.65px;font-size:6.6px;color:#161616;transform:scaleX(0.88);transform-origin:0 0;">G</div>
<div class="a" style="left:23.6px;top:178.1px;width:5px;height:0.7px;background:#bcbcbc;"></div>
<svg class="a" style="left:20.6px;top:175.1px" width="6" height="6" viewBox="0 0 6 6"><rect x="0.5" y="0.5" width="5" height="5" fill="#fafafa" stroke="#a4a4a4" stroke-width="0.7"/><line x1="1.5" y1="3" x2="4.5" y2="3" stroke="#303030" stroke-width="0.8"/><line x1="3" y1="1.5" x2="3" y2="4.5" stroke="#303030" stroke-width="0.8"/></svg>
<svg class="a" style="left:28px;top:174.1px" width="8.5" height="8" viewBox="0 0 8.5 8"><polygon points="0.6,4.2 3.8,0.7 7.9,3 4.5,7.3" fill="#c8dcf0" stroke="#2a3040" stroke-width="0.85"/></svg>
<div class="t" style="left:38px;top:174.3px;font-size:6.6px;color:#161616;transform:scaleX(0.88);transform-origin:0 0;">H</div>
<div class="a" style="left:23.6px;top:186.75px;width:5px;height:0.7px;background:#bcbcbc;"></div>
<svg class="a" style="left:20.6px;top:183.75px" width="6" height="6" viewBox="0 0 6 6"><rect x="0.5" y="0.5" width="5" height="5" fill="#fafafa" stroke="#a4a4a4" stroke-width="0.7"/><line x1="1.5" y1="3" x2="4.5" y2="3" stroke="#303030" stroke-width="0.8"/><line x1="3" y1="1.5" x2="3" y2="4.5" stroke="#303030" stroke-width="0.8"/></svg>
<svg class="a" style="left:28px;top:182.75px" width="8.5" height="8" viewBox="0 0 8.5 8"><polygon points="0.6,4.2 3.8,0.7 7.9,3 4.5,7.3" fill="#c8dcf0" stroke="#2a3040" stroke-width="0.85"/></svg>
<div class="t" style="left:38px;top:182.95px;font-size:6.6px;color:#161616;transform:scaleX(0.88);transform-origin:0 0;">J</div>
<div class="a" style="left:23.6px;top:195.4px;width:5px;height:0.7px;background:#bcbcbc;"></div>
<svg class="a" style="left:20.6px;top:192.4px" width="6" height="6" viewBox="0 0 6 6"><rect x="0.5" y="0.5" width="5" height="5" fill="#fafafa" stroke="#a4a4a4" stroke-width="0.7"/><line x1="1.5" y1="3" x2="4.5" y2="3" stroke="#303030" stroke-width="0.8"/><line x1="3" y1="1.5" x2="3" y2="4.5" stroke="#303030" stroke-width="0.8"/></svg>
<svg class="a" style="left:28px;top:191.4px" width="8.5" height="8" viewBox="0 0 8.5 8"><polygon points="0.6,4.2 3.8,0.7 7.9,3 4.5,7.3" fill="#c8dcf0" stroke="#2a3040" stroke-width="0.85"/></svg>
<div class="t" style="left:38px;top:191.6px;font-size:6.6px;color:#161616;transform:scaleX(0.88);transform-origin:0 0;">K</div>
<div class="a" style="left:14.4px;top:204.05px;width:5px;height:0.7px;background:#bcbcbc;"></div>
<svg class="a" style="left:11.4px;top:201.05px" width="6" height="6" viewBox="0 0 6 6"><rect x="0.5" y="0.5" width="5" height="5" fill="#fafafa" stroke="#a4a4a4" stroke-width="0.7"/><line x1="1.5" y1="3" x2="4.5" y2="3" stroke="#303030" stroke-width="0.8"/><line x1="3" y1="1.5" x2="3" y2="4.5" stroke="#303030" stroke-width="0.8"/></svg>
<svg class="a" style="left:19.3px;top:200.25px" width="8" height="8" viewBox="0 0 8 8"><polygon points="0.4,2.4 3.4,0.5 7.6,1.1 4.8,3.0" fill="#c8d8ea" stroke="#5a7898" stroke-width="0.4"/><polygon points="0.4,2.4 4.8,3.0 4.8,7.6 0.4,6.9" fill="#a8c0dc" stroke="#5a7898" stroke-width="0.4"/><polygon points="4.8,3.0 7.6,1.1 7.6,5.8 4.8,7.6" fill="#6c8cb4" stroke="#5a7898" stroke-width="0.4"/></svg>
<div class="t" style="left:29px;top:200.25px;font-size:6.6px;color:#161616;transform:scaleX(0.88);transform-origin:0 0;">Tank2</div>

<div class="a" style="left:0;top:256px;width:137px;height:1.5px;background:#3c3c3c;"></div>
<!-- Tank Properties -->
<div class="a" style="left:1px;top:257.5px;width:136px;height:10px;background:#a9a9a9;"></div>
<div class="t" style="left:2.3px;top:258.5px;color:#484848;font-size:6.4px;transform:scaleX(0.9);transform-origin:0 0;">Tank Properties</div>
<div class="a" style="left:1px;top:267.5px;width:136px;height:11.5px;background:linear-gradient(#dde1e7,#b5bbc4);"></div>
<svg class="a" style="left:3.5px;top:269px" width="7" height="9" viewBox="0 0 7 9"><polygon points="4.5,0 1,5 3.2,5 2,9 6,3.6 3.8,3.6 5.5,0" fill="#d8c818" stroke="#606010" stroke-width="0.5"/></svg>
<div class="a" style="left:1px;top:279px;width:127.5px;height:174px;background:#e9e9e9;overflow:hidden;"></div>
<svg class="a" style="left:2.4px;top:281px" width="6" height="6" viewBox="0 0 6 6"><rect x="0.5" y="0.5" width="4.6" height="4.6" fill="#f6f6f6" stroke="#b8b8b8" stroke-width="0.6"/><line x1="1.5" y1="2.8" x2="4.1" y2="2.8" stroke="#5a78a8" stroke-width="0.6"/></svg>
<div class="t" style="left:11.5px;top:279.9px;color:#787878;font-size:6.6px;font-weight:bold;transform:scaleX(0.84);transform-origin:0 0;">Box</div>
<div class="a" style="left:9.5px;top:288.7px;width:58.7px;height:8.5px;background:#fff;"></div>
<div class="a" style="left:68.8px;top:288.7px;width:59.3px;height:8.5px;background:#fff;"></div>
<div class="t" style="left:11.5px;top:289px;color:#161616;font-size:6.6px;transform:scaleX(0.88);transform-origin:0 0;">Box Type</div>
<div class="t" style="left:71px;top:289px;color:#161616;font-size:6.6px;transform:scaleX(0.88);transform-origin:0 0;">Ultra Reinforced</div>
<svg class="a" style="left:2.4px;top:299.2px" width="6" height="6" viewBox="0 0 6 6"><rect x="0.5" y="0.5" width="4.6" height="4.6" fill="#f6f6f6" stroke="#b8b8b8" stroke-width="0.6"/><line x1="1.5" y1="2.8" x2="4.1" y2="2.8" stroke="#5a78a8" stroke-width="0.6"/></svg>
<div class="t" style="left:11.5px;top:298.1px;color:#787878;font-size:6.6px;font-weight:bold;transform:scaleX(0.84);transform-origin:0 0;">Beam</div>
<svg class="a" style="left:11.4px;top:308.3px" width="6" height="6" viewBox="0 0 6 6"><rect x="0.5" y="0.5" width="4.6" height="4.6" fill="#f6f6f6" stroke="#b8b8b8" stroke-width="0.6"/><line x1="1.5" y1="2.8" x2="4.1" y2="2.8" stroke="#5a78a8" stroke-width="0.6"/></svg>
<div class="t" style="left:20.7px;top:307.2px;color:#787878;font-size:6.6px;font-weight:bold;transform:scaleX(0.84);transform-origin:0 0;">Wall E</div>
<div class="a" style="left:18.7px;top:316px;width:49.5px;height:8.5px;background:#fff;"></div>
<div class="a" style="left:68.8px;top:316px;width:59.3px;height:8.5px;background:#fff;"></div>
<div class="t" style="left:20.7px;top:316.3px;color:#161616;font-size:6.6px;transform:scaleX(0.88);transform-origin:0 0;">Beam Type</div>
<div class="t" style="left:71px;top:316.3px;color:#161616;font-size:6.6px;transform:scaleX(0.88);transform-origin:0 0;">LB or LDB</div>
<svg class="a" style="left:11.4px;top:326.5px" width="6" height="6" viewBox="0 0 6 6"><rect x="0.5" y="0.5" width="4.6" height="4.6" fill="#f6f6f6" stroke="#b8b8b8" stroke-width="0.6"/><line x1="1.5" y1="2.8" x2="4.1" y2="2.8" stroke="#5a78a8" stroke-width="0.6"/></svg>
<div class="t" style="left:20.7px;top:325.4px;color:#787878;font-size:6.6px;font-weight:bold;transform:scaleX(0.84);transform-origin:0 0;">Wall H</div>
<div class="a" style="left:18.7px;top:334.2px;width:49.5px;height:8.5px;background:#fff;"></div>
<div class="a" style="left:68.8px;top:334.2px;width:59.3px;height:8.5px;background:#fff;"></div>
<div class="t" style="left:20.7px;top:334.5px;color:#161616;font-size:6.6px;transform:scaleX(0.88);transform-origin:0 0;">Beam Type</div>
<div class="t" style="left:71px;top:334.5px;color:#161616;font-size:6.6px;transform:scaleX(0.88);transform-origin:0 0;">LB or LDB</div>
<svg class="a" style="left:2.4px;top:344.7px" width="6" height="6" viewBox="0 0 6 6"><rect x="0.5" y="0.5" width="4.6" height="4.6" fill="#f6f6f6" stroke="#b8b8b8" stroke-width="0.6"/><line x1="1.5" y1="2.8" x2="4.1" y2="2.8" stroke="#5a78a8" stroke-width="0.6"/></svg>
<div class="t" style="left:11.5px;top:343.6px;color:#787878;font-size:6.6px;font-weight:bold;transform:scaleX(0.84);transform-origin:0 0;">Corner &#x413;&#x44C;</div>
<div class="a" style="left:9.5px;top:352.4px;width:58.7px;height:8.5px;background:#fff;"></div>
<div class="a" style="left:68.8px;top:352.4px;width:59.3px;height:8.5px;background:#fff;"></div>
<div class="t" style="left:11.5px;top:352.7px;color:#161616;font-size:6.6px;transform:scaleX(0.88);transform-origin:0 0;">Left</div>
<div class="t" style="left:71px;top:352.7px;color:#161616;font-size:6.6px;transform:scaleX(0.88);transform-origin:0 0;">742</div>
<div class="a" style="left:9.5px;top:361.5px;width:58.7px;height:8.5px;background:#fff;"></div>
<div class="a" style="left:68.8px;top:361.5px;width:59.3px;height:8.5px;background:#fff;"></div>
<div class="t" style="left:11.5px;top:361.8px;color:#161616;font-size:6.6px;transform:scaleX(0.88);transform-origin:0 0;">Down</div>
<div class="t" style="left:71px;top:361.8px;color:#161616;font-size:6.6px;transform:scaleX(0.88);transform-origin:0 0;">482</div>
<div class="a" style="left:9.5px;top:370.6px;width:58.7px;height:8.5px;background:#fff;"></div>
<div class="a" style="left:68.8px;top:370.6px;width:59.3px;height:8.5px;background:#fff;"></div>
<div class="t" style="left:11.5px;top:370.9px;color:#161616;font-size:6.6px;transform:scaleX(0.88);transform-origin:0 0;">Right</div>
<div class="t" style="left:71px;top:370.9px;color:#161616;font-size:6.6px;transform:scaleX(0.88);transform-origin:0 0;">742</div>
<div class="a" style="left:9.5px;top:379.7px;width:58.7px;height:8.5px;background:#fff;"></div>
<div class="a" style="left:68.8px;top:379.7px;width:59.3px;height:8.5px;background:#fff;"></div>
<div class="t" style="left:11.5px;top:380px;color:#161616;font-size:6.6px;transform:scaleX(0.88);transform-origin:0 0;">Up</div>
<div class="t" style="left:71px;top:380px;color:#161616;font-size:6.6px;transform:scaleX(0.88);transform-origin:0 0;">482</div>
<svg class="a" style="left:2.4px;top:390.2px" width="6" height="6" viewBox="0 0 6 6"><rect x="0.5" y="0.5" width="4.6" height="4.6" fill="#f6f6f6" stroke="#b8b8b8" stroke-width="0.6"/><line x1="1.5" y1="2.8" x2="4.1" y2="2.8" stroke="#5a78a8" stroke-width="0.6"/></svg>
<div class="t" style="left:11.5px;top:389.1px;color:#787878;font-size:6.6px;font-weight:bold;transform:scaleX(0.84);transform-origin:0 0;">Center &#x41D;&#x417;</div>
<div class="a" style="left:9.5px;top:397.9px;width:58.7px;height:8.5px;background:#fff;"></div>
<div class="a" style="left:68.8px;top:397.9px;width:59.3px;height:8.5px;background:#fff;"></div>
<div class="t" style="left:11.5px;top:398.2px;color:#161616;font-size:6.6px;transform:scaleX(0.88);transform-origin:0 0;">X</div>
<div class="t" style="left:71px;top:398.2px;color:#161616;font-size:6.6px;transform:scaleX(0.88);transform-origin:0 0;">-200</div>
<div class="a" style="left:9.5px;top:407px;width:58.7px;height:8.5px;background:#fff;"></div>
<div class="a" style="left:68.8px;top:407px;width:59.3px;height:8.5px;background:#fff;"></div>
<div class="t" style="left:11.5px;top:407.3px;color:#161616;font-size:6.6px;transform:scaleX(0.88);transform-origin:0 0;">Y</div>
<div class="t" style="left:71px;top:407.3px;color:#161616;font-size:6.6px;transform:scaleX(0.88);transform-origin:0 0;">250</div>
<svg class="a" style="left:11.4px;top:417.5px" width="6" height="6" viewBox="0 0 6 6"><rect x="0.5" y="0.5" width="4.6" height="4.6" fill="#f6f6f6" stroke="#b8b8b8" stroke-width="0.6"/><line x1="1.5" y1="2.8" x2="4.1" y2="2.8" stroke="#5a78a8" stroke-width="0.6"/></svg>
<div class="t" style="left:20.7px;top:416.4px;color:#787878;font-size:6.6px;font-weight:bold;transform:scaleX(0.84);transform-origin:0 0;">Wall B</div>
<div class="a" style="left:18.7px;top:425.2px;width:49.5px;height:8.5px;background:#fff;"></div>
<div class="a" style="left:68.8px;top:425.2px;width:59.3px;height:8.5px;background:#fff;"></div>
<div class="t" style="left:20.7px;top:425.5px;color:#161616;font-size:6.6px;transform:scaleX(0.88);transform-origin:0 0;">5 Box</div>
<div class="t" style="left:71px;top:425.5px;color:#161616;font-size:6.6px;transform:scaleX(0.88);transform-origin:0 0;">-0</div>
<div class="a" style="left:18.7px;top:434.3px;width:49.5px;height:8.5px;background:#fff;"></div>
<div class="a" style="left:68.8px;top:434.3px;width:59.3px;height:8.5px;background:#fff;"></div>
<div class="t" style="left:20.7px;top:434.6px;color:#161616;font-size:6.6px;transform:scaleX(0.88);transform-origin:0 0;">6 Box</div>
<div class="t" style="left:71px;top:434.6px;color:#161616;font-size:6.6px;transform:scaleX(0.88);transform-origin:0 0;">-0</div>
<div class="a" style="left:18.7px;top:443.4px;width:49.5px;height:8.5px;background:#fff;"></div>
<div class="a" style="left:68.8px;top:443.4px;width:59.3px;height:8.5px;background:#fff;"></div>
<div class="t" style="left:20.7px;top:443.7px;color:#161616;font-size:6.6px;transform:scaleX(0.88);transform-origin:0 0;">789 Box</div>
<div class="t" style="left:71px;top:443.7px;color:#161616;font-size:6.6px;transform:scaleX(0.88);transform-origin:0 0;">-0</div>
<div class="a" style="left:128.3px;top:279px;width:8px;height:174px;background:#f2f2f2;border-left:0.6px solid #d8d8d8;box-sizing:border-box;"></div>
<div class="a" style="left:129px;top:287px;width:7px;height:81px;background:#fafafa;border:0.7px solid #a8a8a8;box-sizing:border-box;"></div>
<div class="a" style="left:130.5px;top:282px;width:0;height:0;border-left:2px solid transparent;border-right:2px solid transparent;border-bottom:2.2px solid #202020;"></div>
<div class="a" style="left:130.5px;top:447px;width:0;height:0;border-left:2px solid transparent;border-right:2px solid transparent;border-top:2.2px solid #202020;"></div>
<div class="a" style="left:1px;top:452.5px;width:136px;height:25.5px;background:#e8e8e8;border-top:0.8px solid #9a9a9a;box-sizing:border-box;"></div>

<!-- splitter -->
<div class="a" style="left:137px;top:43px;width:2px;height:437px;background:#3c3c3c;"></div>

<!-- OUTPUT PANEL -->
<div class="a" style="left:139px;top:43px;width:163px;height:437px;background:#d4d4d4;"></div>
<div class="a" style="left:139px;top:43px;width:160px;height:9.5px;background:#a9a9a9;"></div>
<div class="t" style="left:141.5px;top:44px;color:#383838;font-size:6.4px;transform:scaleX(0.9);transform-origin:0 0;">Output</div>
<svg class="a" style="left:291px;top:44px" width="8" height="8"><line x1="1.5" y1="1.6" x2="6" y2="6.1" stroke="#3a3a3a" stroke-width="0.8"/><line x1="6" y1="1.6" x2="1.5" y2="6.1" stroke="#3a3a3a" stroke-width="0.8"/></svg>
<div class="a" style="left:139px;top:52.5px;width:159px;height:12px;background:#f4f4f4;"></div><div class="a" style="left:140px;top:54px;width:158px;height:10px;background:#fff;border-top:1px solid #7a7a7a;border-left:1px solid #7a7a7a;box-sizing:border-box;"></div>
<div class="a" style="left:140px;top:64px;width:158px;height:405.5px;background:#fff;border-left:1px solid #7a7a7a;border-top:1px solid #8a8a8a;box-sizing:border-box;"></div>
<div class="t" style="left:142px;top:64.8px;color:#2a2024;font-size:6.2px;line-height:6.16px;transform:scaleX(0.87);transform-origin:0 0;"><span style="letter-spacing:0.75px">========</span> Box <span style="letter-spacing:0.75px">========</span><br>BoxType : Ultra Reinforced<br>BoxCode : X45<br>BoxNumber : 0<br>Boundary Length : 1200.000 Boundary Width : 1000.000<br>Left : -14600.000 Right : -13400.000 Top : 8750.000 Bottom : 775<br>Area : 1150000.000<br>Row, Col : 8, -12<br>_P1(-14575.000,7750.000)<br>_P2(-13425.000,7750.000)<br>_P3(-13425.000,8750.000)<br>_P4(-14575.000,8750.000)</div>
<div class="a" style="left:139px;top:470px;width:159px;height:8.5px;background:#6e6e6e;"></div>
<div class="a" style="left:140px;top:471px;width:6px;height:6.5px;background:#d8d8d8;border:0.5px solid #f0f0f0;box-sizing:border-box;"></div>
<div class="a" style="left:142px;top:472.8px;width:0;height:0;border-top:1.5px solid transparent;border-bottom:1.5px solid transparent;border-right:2px solid #303030;"></div>
<div class="a" style="left:148px;top:471px;width:6px;height:6.5px;background:#d8d8d8;border:0.5px solid #f0f0f0;box-sizing:border-box;"></div>
<div class="a" style="left:150px;top:472.8px;width:0;height:0;border-top:1.5px solid transparent;border-bottom:1.5px solid transparent;border-right:2px solid #303030;"></div>
<div class="a" style="left:155.5px;top:471px;width:6px;height:6.5px;background:#d8d8d8;border:0.5px solid #f0f0f0;box-sizing:border-box;"></div>
<div class="a" style="left:157.5px;top:472.8px;width:0;height:0;border-top:1.5px solid transparent;border-bottom:1.5px solid transparent;border-left:2px solid #303030;"></div>
<div class="a" style="left:163px;top:471px;width:6px;height:6.5px;background:#d8d8d8;border:0.5px solid #f0f0f0;box-sizing:border-box;"></div>
<div class="a" style="left:165px;top:472.8px;width:0;height:0;border-top:1.5px solid transparent;border-bottom:1.5px solid transparent;border-left:2px solid #303030;"></div>
<svg class="a" style="left:170px;top:469.5px" width="14" height="9"><polygon points="0,0 10,0 3,9 0,9" fill="#f4f4f4"/></svg>
<div class="a" style="left:298px;top:43px;width:4px;height:437px;background:linear-gradient(90deg,#f0f0f0 0 1px,#a0a0a0 1px 2.5px,#6e6e6e 2.5px);"></div>

<!-- CAD view -->
<div class="a" style="left:302px;top:43px;width:520px;height:437px;background:#b0b0b0;"></div>
<svg width="822" height="480" viewBox="0 0 822 480" style="position:absolute;left:0;top:0;will-change:transform">
<rect x="302" y="43.5" width="518.5" height="434.5" fill="#000"/>
<defs><clipPath id="cp"><polygon points="383.8,142.35 738.5,240.32 738.5,281.48 383.8,379.45"/></clipPath></defs>
<g clip-path="url(#cp)" font-family="Liberation Sans" font-weight="bold">
<text x="389.8" y="148.26" font-size="2.95" fill="#d08a10" stroke="#d08a10" stroke-width="0.16" text-anchor="middle">X45</text>
<text x="389.8" y="157.11" font-size="2.95" fill="#d08a10" stroke="#d08a10" stroke-width="0.16" text-anchor="middle">X45</text>
<text x="389.8" y="168.41" font-size="2.95" fill="#d08a10" stroke="#d08a10" stroke-width="0.16" text-anchor="middle">X45</text>
<text x="389.8" y="179.71" font-size="2.95" fill="#d08a10" stroke="#d08a10" stroke-width="0.16" text-anchor="middle">X45</text>
<text x="389.8" y="191.01" font-size="2.95" fill="#d08a10" stroke="#d08a10" stroke-width="0.16" text-anchor="middle">X45</text>
<text x="389.8" y="202.31" font-size="2.95" fill="#d08a10" stroke="#d08a10" stroke-width="0.16" text-anchor="middle">X45</text>
<text x="389.8" y="213.36" font-size="2.95" fill="#d08a10" stroke="#d08a10" stroke-width="0.16" text-anchor="middle">X45</text>
<text x="389.8" y="279.24" font-size="2.95" fill="#d08a10" stroke="#d08a10" stroke-width="0.16" text-anchor="middle">X45</text>
<text x="389.8" y="287.69" font-size="2.95" fill="#d08a10" stroke="#d08a10" stroke-width="0.16" text-anchor="middle">X45</text>
<text x="389.8" y="299.04" font-size="2.95" fill="#d08a10" stroke="#d08a10" stroke-width="0.16" text-anchor="middle">X45</text>
<text x="389.8" y="310.39" font-size="2.95" fill="#d08a10" stroke="#d08a10" stroke-width="0.16" text-anchor="middle">X45</text>
<text x="389.8" y="321.74" font-size="2.95" fill="#d08a10" stroke="#d08a10" stroke-width="0.16" text-anchor="middle">X45</text>
<text x="389.8" y="333.09" font-size="2.95" fill="#d08a10" stroke="#d08a10" stroke-width="0.16" text-anchor="middle">X45</text>
<text x="389.8" y="344.44" font-size="2.95" fill="#d08a10" stroke="#d08a10" stroke-width="0.16" text-anchor="middle">X45</text>
<text x="389.8" y="355.79" font-size="2.95" fill="#d08a10" stroke="#d08a10" stroke-width="0.16" text-anchor="middle">X45</text>
<text x="389.8" y="367.14" font-size="2.95" fill="#d08a10" stroke="#d08a10" stroke-width="0.16" text-anchor="middle">X45</text>
<text x="389.8" y="375.83" font-size="2.95" fill="#d08a10" stroke="#d08a10" stroke-width="0.16" text-anchor="middle">X45</text>
<text x="402.6" y="157.11" font-size="2.95" fill="#dcdcdc" stroke="#dcdcdc" stroke-width="0.16" text-anchor="middle">X45</text>
<text x="402.6" y="168.41" font-size="2.95" fill="#dcdcdc" stroke="#dcdcdc" stroke-width="0.16" text-anchor="middle">X45</text>
<text x="402.6" y="179.71" font-size="2.95" fill="#dcdcdc" stroke="#dcdcdc" stroke-width="0.16" text-anchor="middle">X45</text>
<text x="402.6" y="191.01" font-size="2.95" fill="#dcdcdc" stroke="#dcdcdc" stroke-width="0.16" text-anchor="middle">X45</text>
<text x="402.6" y="202.31" font-size="2.95" fill="#dcdcdc" stroke="#dcdcdc" stroke-width="0.16" text-anchor="middle">X45</text>
<text x="402.6" y="213.36" font-size="2.95" fill="#dcdcdc" stroke="#dcdcdc" stroke-width="0.16" text-anchor="middle">X45</text>
<text x="402.6" y="279.24" font-size="2.95" fill="#dcdcdc" stroke="#dcdcdc" stroke-width="0.16" text-anchor="middle">X45</text>
<text x="402.6" y="287.69" font-size="2.95" fill="#dcdcdc" stroke="#dcdcdc" stroke-width="0.16" text-anchor="middle">X45</text>
<text x="402.6" y="299.04" font-size="2.95" fill="#dcdcdc" stroke="#dcdcdc" stroke-width="0.16" text-anchor="middle">X45</text>
<text x="402.6" y="310.39" font-size="2.95" fill="#dcdcdc" stroke="#dcdcdc" stroke-width="0.16" text-anchor="middle">X45</text>
<text x="402.6" y="321.74" font-size="2.95" fill="#dcdcdc" stroke="#dcdcdc" stroke-width="0.16" text-anchor="middle">X45</text>
<text x="402.6" y="333.09" font-size="2.95" fill="#dcdcdc" stroke="#dcdcdc" stroke-width="0.16" text-anchor="middle">X45</text>
<text x="402.6" y="344.44" font-size="2.95" fill="#dcdcdc" stroke="#dcdcdc" stroke-width="0.16" text-anchor="middle">X45</text>
<text x="402.6" y="355.79" font-size="2.95" fill="#dcdcdc" stroke="#dcdcdc" stroke-width="0.16" text-anchor="middle">X45</text>
<text x="402.6" y="367.14" font-size="2.95" fill="#dcdcdc" stroke="#dcdcdc" stroke-width="0.16" text-anchor="middle">X45</text>
<text x="416.2" y="157.56" font-size="2.95" fill="#10c020" stroke="#10c020" stroke-width="0.16" text-anchor="middle">X4L</text>
<text x="416.2" y="168.41" font-size="2.95" fill="#dcdcdc" stroke="#dcdcdc" stroke-width="0.16" text-anchor="middle">X45</text>
<text x="416.2" y="179.71" font-size="2.95" fill="#dcdcdc" stroke="#dcdcdc" stroke-width="0.16" text-anchor="middle">X45</text>
<text x="416.2" y="191.01" font-size="2.95" fill="#dcdcdc" stroke="#dcdcdc" stroke-width="0.16" text-anchor="middle">X45</text>
<text x="416.2" y="202.31" font-size="2.95" fill="#dcdcdc" stroke="#dcdcdc" stroke-width="0.16" text-anchor="middle">X45</text>
<text x="416.2" y="213.36" font-size="2.95" fill="#dcdcdc" stroke="#dcdcdc" stroke-width="0.16" text-anchor="middle">X45</text>
<text x="416.2" y="279.24" font-size="2.95" fill="#dcdcdc" stroke="#dcdcdc" stroke-width="0.16" text-anchor="middle">X45</text>
<text x="416.2" y="287.69" font-size="2.95" fill="#dcdcdc" stroke="#dcdcdc" stroke-width="0.16" text-anchor="middle">X45</text>
<text x="416.2" y="299.04" font-size="2.95" fill="#dcdcdc" stroke="#dcdcdc" stroke-width="0.16" text-anchor="middle">X45</text>
<text x="416.2" y="310.39" font-size="2.95" fill="#dcdcdc" stroke="#dcdcdc" stroke-width="0.16" text-anchor="middle">X45</text>
<text x="416.2" y="321.74" font-size="2.95" fill="#dcdcdc" stroke="#dcdcdc" stroke-width="0.16" text-anchor="middle">X45</text>
<text x="416.2" y="333.09" font-size="2.95" fill="#dcdcdc" stroke="#dcdcdc" stroke-width="0.16" text-anchor="middle">X45</text>
<text x="416.2" y="344.44" font-size="2.95" fill="#dcdcdc" stroke="#dcdcdc" stroke-width="0.16" text-anchor="middle">X45</text>
<text x="416.2" y="355.79" font-size="2.95" fill="#dcdcdc" stroke="#dcdcdc" stroke-width="0.16" text-anchor="middle">X45</text>
<text x="416.2" y="366.51" font-size="2.95" fill="#10c020" stroke="#10c020" stroke-width="0.16" text-anchor="middle">X4L</text>
<text x="429.8" y="159.44" font-size="2.95" fill="#10c020" stroke="#10c020" stroke-width="0.16" text-anchor="middle">X4L</text>
<text x="429.8" y="168.41" font-size="2.95" fill="#dcdcdc" stroke="#dcdcdc" stroke-width="0.16" text-anchor="middle">X45</text>
<text x="429.8" y="179.71" font-size="2.95" fill="#dcdcdc" stroke="#dcdcdc" stroke-width="0.16" text-anchor="middle">X45</text>
<text x="429.8" y="191.01" font-size="2.95" fill="#dcdcdc" stroke="#dcdcdc" stroke-width="0.16" text-anchor="middle">X45</text>
<text x="429.8" y="202.31" font-size="2.95" fill="#dcdcdc" stroke="#dcdcdc" stroke-width="0.16" text-anchor="middle">X45</text>
<text x="429.8" y="213.36" font-size="2.95" fill="#dcdcdc" stroke="#dcdcdc" stroke-width="0.16" text-anchor="middle">X45</text>
<text x="429.8" y="279.24" font-size="2.95" fill="#dcdcdc" stroke="#dcdcdc" stroke-width="0.16" text-anchor="middle">X45</text>
<text x="429.8" y="287.69" font-size="2.95" fill="#dcdcdc" stroke="#dcdcdc" stroke-width="0.16" text-anchor="middle">X45</text>
<text x="429.8" y="299.04" font-size="2.95" fill="#dcdcdc" stroke="#dcdcdc" stroke-width="0.16" text-anchor="middle">X45</text>
<text x="429.8" y="310.39" font-size="2.95" fill="#dcdcdc" stroke="#dcdcdc" stroke-width="0.16" text-anchor="middle">X45</text>
<text x="429.8" y="321.74" font-size="2.95" fill="#dcdcdc" stroke="#dcdcdc" stroke-width="0.16" text-anchor="middle">X45</text>
<text x="429.8" y="333.09" font-size="2.95" fill="#dcdcdc" stroke="#dcdcdc" stroke-width="0.16" text-anchor="middle">X45</text>
<text x="429.8" y="344.44" font-size="2.95" fill="#dcdcdc" stroke="#dcdcdc" stroke-width="0.16" text-anchor="middle">X45</text>
<text x="429.8" y="355.79" font-size="2.95" fill="#dcdcdc" stroke="#dcdcdc" stroke-width="0.16" text-anchor="middle">X45</text>
<text x="429.8" y="364.64" font-size="2.95" fill="#10c020" stroke="#10c020" stroke-width="0.16" text-anchor="middle">X4L</text>
<text x="443.4" y="168.41" font-size="2.95" fill="#dcdcdc" stroke="#dcdcdc" stroke-width="0.16" text-anchor="middle">X45</text>
<text x="443.4" y="179.71" font-size="2.95" fill="#dcdcdc" stroke="#dcdcdc" stroke-width="0.16" text-anchor="middle">X45</text>
<text x="443.4" y="191.01" font-size="2.95" fill="#dcdcdc" stroke="#dcdcdc" stroke-width="0.16" text-anchor="middle">X45</text>
<text x="443.4" y="202.31" font-size="2.95" fill="#dcdcdc" stroke="#dcdcdc" stroke-width="0.16" text-anchor="middle">X45</text>
<text x="443.4" y="213.56" font-size="2.95" fill="#dcdcdc" stroke="#dcdcdc" stroke-width="0.16" text-anchor="middle">X45</text>
<text x="443.4" y="224.81" font-size="2.95" fill="#dcdcdc" stroke="#dcdcdc" stroke-width="0.16" text-anchor="middle">X45</text>
<text x="443.4" y="233.47" font-size="2.7" fill="#dcdcdc" stroke="#dcdcdc" stroke-width="0.16" text-anchor="middle">X4T</text>
<text x="443.4" y="242.31" font-size="2.95" fill="#dcdcdc" stroke="#dcdcdc" stroke-width="0.16" text-anchor="middle">X45</text>
<text x="443.4" y="253.64" font-size="2.95" fill="#dcdcdc" stroke="#dcdcdc" stroke-width="0.16" text-anchor="middle">X45</text>
<text x="443.4" y="264.99" font-size="2.95" fill="#dcdcdc" stroke="#dcdcdc" stroke-width="0.16" text-anchor="middle">X45</text>
<text x="443.4" y="276.34" font-size="2.95" fill="#dcdcdc" stroke="#dcdcdc" stroke-width="0.16" text-anchor="middle">X45</text>
<text x="443.4" y="287.69" font-size="2.95" fill="#dcdcdc" stroke="#dcdcdc" stroke-width="0.16" text-anchor="middle">X45</text>
<text x="443.4" y="299.04" font-size="2.95" fill="#dcdcdc" stroke="#dcdcdc" stroke-width="0.16" text-anchor="middle">X45</text>
<text x="443.4" y="310.39" font-size="2.95" fill="#dcdcdc" stroke="#dcdcdc" stroke-width="0.16" text-anchor="middle">X45</text>
<text x="443.4" y="321.74" font-size="2.95" fill="#dcdcdc" stroke="#dcdcdc" stroke-width="0.16" text-anchor="middle">X45</text>
<text x="443.4" y="333.09" font-size="2.95" fill="#dcdcdc" stroke="#dcdcdc" stroke-width="0.16" text-anchor="middle">X45</text>
<text x="443.4" y="344.44" font-size="2.95" fill="#dcdcdc" stroke="#dcdcdc" stroke-width="0.16" text-anchor="middle">X45</text>
<text x="443.4" y="355.79" font-size="2.95" fill="#dcdcdc" stroke="#dcdcdc" stroke-width="0.16" text-anchor="middle">X45</text>
<text x="457" y="168.84" font-size="2.95" fill="#10c020" stroke="#10c020" stroke-width="0.16" text-anchor="middle">X4L</text>
<text x="457" y="179.71" font-size="2.95" fill="#dcdcdc" stroke="#dcdcdc" stroke-width="0.16" text-anchor="middle">X45</text>
<text x="457" y="191.01" font-size="2.95" fill="#dcdcdc" stroke="#dcdcdc" stroke-width="0.16" text-anchor="middle">X45</text>
<text x="457" y="202.31" font-size="2.95" fill="#dcdcdc" stroke="#dcdcdc" stroke-width="0.16" text-anchor="middle">X45</text>
<text x="457" y="213.56" font-size="2.95" fill="#dcdcdc" stroke="#dcdcdc" stroke-width="0.16" text-anchor="middle">X45</text>
<text x="457" y="224.81" font-size="2.95" fill="#dcdcdc" stroke="#dcdcdc" stroke-width="0.16" text-anchor="middle">X45</text>
<text x="457" y="233.47" font-size="2.7" fill="#dcdcdc" stroke="#dcdcdc" stroke-width="0.16" text-anchor="middle">X4T</text>
<text x="457" y="242.31" font-size="2.95" fill="#dcdcdc" stroke="#dcdcdc" stroke-width="0.16" text-anchor="middle">X45</text>
<text x="457" y="253.64" font-size="2.95" fill="#dcdcdc" stroke="#dcdcdc" stroke-width="0.16" text-anchor="middle">X45</text>
<text x="457" y="264.99" font-size="2.95" fill="#dcdcdc" stroke="#dcdcdc" stroke-width="0.16" text-anchor="middle">X45</text>
<text x="457" y="276.34" font-size="2.95" fill="#dcdcdc" stroke="#dcdcdc" stroke-width="0.16" text-anchor="middle">X45</text>
<text x="457" y="287.69" font-size="2.95" fill="#dcdcdc" stroke="#dcdcdc" stroke-width="0.16" text-anchor="middle">X45</text>
<text x="457" y="299.04" font-size="2.95" fill="#dcdcdc" stroke="#dcdcdc" stroke-width="0.16" text-anchor="middle">X45</text>
<text x="457" y="310.39" font-size="2.95" fill="#dcdcdc" stroke="#dcdcdc" stroke-width="0.16" text-anchor="middle">X45</text>
<text x="457" y="321.74" font-size="2.95" fill="#dcdcdc" stroke="#dcdcdc" stroke-width="0.16" text-anchor="middle">X45</text>
<text x="457" y="333.09" font-size="2.95" fill="#dcdcdc" stroke="#dcdcdc" stroke-width="0.16" text-anchor="middle">X45</text>
<text x="457" y="344.44" font-size="2.95" fill="#dcdcdc" stroke="#dcdcdc" stroke-width="0.16" text-anchor="middle">X45</text>
<text x="457" y="355.2" font-size="2.95" fill="#10c020" stroke="#10c020" stroke-width="0.16" text-anchor="middle">X4L</text>
<text x="470.6" y="170.72" font-size="2.95" fill="#10c020" stroke="#10c020" stroke-width="0.16" text-anchor="middle">X4L</text>
<text x="470.6" y="179.71" font-size="2.95" fill="#dcdcdc" stroke="#dcdcdc" stroke-width="0.16" text-anchor="middle">X45</text>
<text x="470.6" y="191.01" font-size="2.95" fill="#dcdcdc" stroke="#dcdcdc" stroke-width="0.16" text-anchor="middle">X45</text>
<text x="470.6" y="202.31" font-size="2.95" fill="#dcdcdc" stroke="#dcdcdc" stroke-width="0.16" text-anchor="middle">X45</text>
<text x="470.6" y="213.56" font-size="2.95" fill="#dcdcdc" stroke="#dcdcdc" stroke-width="0.16" text-anchor="middle">X45</text>
<text x="470.6" y="224.81" font-size="2.95" fill="#dcdcdc" stroke="#dcdcdc" stroke-width="0.16" text-anchor="middle">X45</text>
<text x="470.6" y="233.47" font-size="2.7" fill="#dcdcdc" stroke="#dcdcdc" stroke-width="0.16" text-anchor="middle">X4T</text>
<text x="470.6" y="242.31" font-size="2.95" fill="#dcdcdc" stroke="#dcdcdc" stroke-width="0.16" text-anchor="middle">X45</text>
<text x="470.6" y="253.64" font-size="2.95" fill="#dcdcdc" stroke="#dcdcdc" stroke-width="0.16" text-anchor="middle">X45</text>
<text x="470.6" y="264.99" font-size="2.95" fill="#dcdcdc" stroke="#dcdcdc" stroke-width="0.16" text-anchor="middle">X45</text>
<text x="470.6" y="276.34" font-size="2.95" fill="#dcdcdc" stroke="#dcdcdc" stroke-width="0.16" text-anchor="middle">X45</text>
<text x="470.6" y="287.69" font-size="2.95" fill="#dcdcdc" stroke="#dcdcdc" stroke-width="0.16" text-anchor="middle">X45</text>
<text x="470.6" y="299.04" font-size="2.95" fill="#dcdcdc" stroke="#dcdcdc" stroke-width="0.16" text-anchor="middle">X45</text>
<text x="470.6" y="310.39" font-size="2.95" fill="#dcdcdc" stroke="#dcdcdc" stroke-width="0.16" text-anchor="middle">X45</text>
<text x="470.6" y="321.74" font-size="2.95" fill="#dcdcdc" stroke="#dcdcdc" stroke-width="0.16" text-anchor="middle">X45</text>
<text x="470.6" y="333.09" font-size="2.95" fill="#dcdcdc" stroke="#dcdcdc" stroke-width="0.16" text-anchor="middle">X45</text>
<text x="470.6" y="344.44" font-size="2.95" fill="#dcdcdc" stroke="#dcdcdc" stroke-width="0.16" text-anchor="middle">X45</text>
<text x="470.6" y="353.33" font-size="2.95" fill="#10c020" stroke="#10c020" stroke-width="0.16" text-anchor="middle">X4L</text>
<text x="484.2" y="179.71" font-size="2.95" fill="#dcdcdc" stroke="#dcdcdc" stroke-width="0.16" text-anchor="middle">X45</text>
<text x="484.2" y="191.01" font-size="2.95" fill="#dcdcdc" stroke="#dcdcdc" stroke-width="0.16" text-anchor="middle">X45</text>
<text x="484.2" y="202.31" font-size="2.95" fill="#dcdcdc" stroke="#dcdcdc" stroke-width="0.16" text-anchor="middle">X45</text>
<text x="484.2" y="213.56" font-size="2.95" fill="#dcdcdc" stroke="#dcdcdc" stroke-width="0.16" text-anchor="middle">X45</text>
<text x="484.2" y="224.81" font-size="2.95" fill="#dcdcdc" stroke="#dcdcdc" stroke-width="0.16" text-anchor="middle">X45</text>
<text x="484.2" y="233.47" font-size="2.7" fill="#dcdcdc" stroke="#dcdcdc" stroke-width="0.16" text-anchor="middle">X4T</text>
<text x="484.2" y="242.31" font-size="2.95" fill="#dcdcdc" stroke="#dcdcdc" stroke-width="0.16" text-anchor="middle">X45</text>
<text x="484.2" y="253.64" font-size="2.95" fill="#dcdcdc" stroke="#dcdcdc" stroke-width="0.16" text-anchor="middle">X45</text>
<text x="484.2" y="264.99" font-size="2.95" fill="#dcdcdc" stroke="#dcdcdc" stroke-width="0.16" text-anchor="middle">X45</text>
<text x="484.2" y="276.34" font-size="2.95" fill="#dcdcdc" stroke="#dcdcdc" stroke-width="0.16" text-anchor="middle">X45</text>
<text x="484.2" y="287.69" font-size="2.95" fill="#dcdcdc" stroke="#dcdcdc" stroke-width="0.16" text-anchor="middle">X45</text>
<text x="484.2" y="299.04" font-size="2.95" fill="#dcdcdc" stroke="#dcdcdc" stroke-width="0.16" text-anchor="middle">X45</text>
<text x="484.2" y="310.39" font-size="2.95" fill="#dcdcdc" stroke="#dcdcdc" stroke-width="0.16" text-anchor="middle">X45</text>
<text x="484.2" y="321.74" font-size="2.95" fill="#dcdcdc" stroke="#dcdcdc" stroke-width="0.16" text-anchor="middle">X45</text>
<text x="484.2" y="333.09" font-size="2.95" fill="#dcdcdc" stroke="#dcdcdc" stroke-width="0.16" text-anchor="middle">X45</text>
<text x="484.2" y="344.44" font-size="2.95" fill="#dcdcdc" stroke="#dcdcdc" stroke-width="0.16" text-anchor="middle">X45</text>
<text x="497.8" y="180.13" font-size="2.95" fill="#10c020" stroke="#10c020" stroke-width="0.16" text-anchor="middle">X4L</text>
<text x="497.8" y="191.01" font-size="2.95" fill="#dcdcdc" stroke="#dcdcdc" stroke-width="0.16" text-anchor="middle">X45</text>
<text x="497.8" y="202.31" font-size="2.95" fill="#dcdcdc" stroke="#dcdcdc" stroke-width="0.16" text-anchor="middle">X45</text>
<text x="497.8" y="213.56" font-size="2.95" fill="#dcdcdc" stroke="#dcdcdc" stroke-width="0.16" text-anchor="middle">X45</text>
<text x="497.8" y="224.81" font-size="2.95" fill="#dcdcdc" stroke="#dcdcdc" stroke-width="0.16" text-anchor="middle">X45</text>
<text x="497.8" y="233.47" font-size="2.7" fill="#dcdcdc" stroke="#dcdcdc" stroke-width="0.16" text-anchor="middle">X4T</text>
<text x="497.8" y="242.31" font-size="2.95" fill="#dcdcdc" stroke="#dcdcdc" stroke-width="0.16" text-anchor="middle">X45</text>
<text x="497.8" y="253.64" font-size="2.95" fill="#dcdcdc" stroke="#dcdcdc" stroke-width="0.16" text-anchor="middle">X45</text>
<text x="497.8" y="264.99" font-size="2.95" fill="#dcdcdc" stroke="#dcdcdc" stroke-width="0.16" text-anchor="middle">X45</text>
<text x="497.8" y="276.34" font-size="2.95" fill="#dcdcdc" stroke="#dcdcdc" stroke-width="0.16" text-anchor="middle">X45</text>
<text x="497.8" y="287.69" font-size="2.95" fill="#dcdcdc" stroke="#dcdcdc" stroke-width="0.16" text-anchor="middle">X45</text>
<text x="497.8" y="299.04" font-size="2.95" fill="#dcdcdc" stroke="#dcdcdc" stroke-width="0.16" text-anchor="middle">X45</text>
<text x="497.8" y="310.39" font-size="2.95" fill="#dcdcdc" stroke="#dcdcdc" stroke-width="0.16" text-anchor="middle">X45</text>
<text x="497.8" y="321.74" font-size="2.95" fill="#dcdcdc" stroke="#dcdcdc" stroke-width="0.16" text-anchor="middle">X45</text>
<text x="497.8" y="333.09" font-size="2.95" fill="#dcdcdc" stroke="#dcdcdc" stroke-width="0.16" text-anchor="middle">X45</text>
<text x="497.8" y="343.89" font-size="2.95" fill="#10c020" stroke="#10c020" stroke-width="0.16" text-anchor="middle">X4L</text>
<text x="511.4" y="182.01" font-size="2.95" fill="#10c020" stroke="#10c020" stroke-width="0.16" text-anchor="middle">X4L</text>
<text x="511.4" y="191.01" font-size="2.95" fill="#dcdcdc" stroke="#dcdcdc" stroke-width="0.16" text-anchor="middle">X45</text>
<text x="511.4" y="202.31" font-size="2.95" fill="#dcdcdc" stroke="#dcdcdc" stroke-width="0.16" text-anchor="middle">X45</text>
<text x="511.4" y="213.56" font-size="2.95" fill="#dcdcdc" stroke="#dcdcdc" stroke-width="0.16" text-anchor="middle">X45</text>
<text x="511.4" y="224.81" font-size="2.95" fill="#dcdcdc" stroke="#dcdcdc" stroke-width="0.16" text-anchor="middle">X45</text>
<text x="511.4" y="233.47" font-size="2.7" fill="#dcdcdc" stroke="#dcdcdc" stroke-width="0.16" text-anchor="middle">X4T</text>
<text x="511.4" y="242.31" font-size="2.95" fill="#dcdcdc" stroke="#dcdcdc" stroke-width="0.16" text-anchor="middle">X45</text>
<text x="511.4" y="253.64" font-size="2.95" fill="#dcdcdc" stroke="#dcdcdc" stroke-width="0.16" text-anchor="middle">X45</text>
<text x="511.4" y="264.99" font-size="2.95" fill="#dcdcdc" stroke="#dcdcdc" stroke-width="0.16" text-anchor="middle">X45</text>
<text x="511.4" y="276.34" font-size="2.95" fill="#dcdcdc" stroke="#dcdcdc" stroke-width="0.16" text-anchor="middle">X45</text>
<text x="511.4" y="287.69" font-size="2.95" fill="#dcdcdc" stroke="#dcdcdc" stroke-width="0.16" text-anchor="middle">X45</text>
<text x="511.4" y="299.04" font-size="2.95" fill="#dcdcdc" stroke="#dcdcdc" stroke-width="0.16" text-anchor="middle">X45</text>
<text x="511.4" y="310.39" font-size="2.95" fill="#dcdcdc" stroke="#dcdcdc" stroke-width="0.16" text-anchor="middle">X45</text>
<text x="511.4" y="321.74" font-size="2.95" fill="#dcdcdc" stroke="#dcdcdc" stroke-width="0.16" text-anchor="middle">X45</text>
<text x="511.4" y="333.09" font-size="2.95" fill="#dcdcdc" stroke="#dcdcdc" stroke-width="0.16" text-anchor="middle">X45</text>
<text x="511.4" y="342.02" font-size="2.95" fill="#10c020" stroke="#10c020" stroke-width="0.16" text-anchor="middle">X4L</text>
<text x="525" y="191.01" font-size="2.95" fill="#dcdcdc" stroke="#dcdcdc" stroke-width="0.16" text-anchor="middle">X45</text>
<text x="525" y="202.31" font-size="2.95" fill="#dcdcdc" stroke="#dcdcdc" stroke-width="0.16" text-anchor="middle">X45</text>
<text x="525" y="213.56" font-size="2.95" fill="#dcdcdc" stroke="#dcdcdc" stroke-width="0.16" text-anchor="middle">X45</text>
<text x="525" y="224.81" font-size="2.95" fill="#dcdcdc" stroke="#dcdcdc" stroke-width="0.16" text-anchor="middle">X45</text>
<text x="525" y="233.47" font-size="2.7" fill="#dcdcdc" stroke="#dcdcdc" stroke-width="0.16" text-anchor="middle">X4T</text>
<text x="525" y="242.31" font-size="2.95" fill="#dcdcdc" stroke="#dcdcdc" stroke-width="0.16" text-anchor="middle">X45</text>
<text x="525" y="253.64" font-size="2.95" fill="#dcdcdc" stroke="#dcdcdc" stroke-width="0.16" text-anchor="middle">X45</text>
<text x="525" y="264.99" font-size="2.95" fill="#dcdcdc" stroke="#dcdcdc" stroke-width="0.16" text-anchor="middle">X45</text>
<text x="525" y="276.34" font-size="2.95" fill="#dcdcdc" stroke="#dcdcdc" stroke-width="0.16" text-anchor="middle">X45</text>
<text x="525" y="287.69" font-size="2.95" fill="#dcdcdc" stroke="#dcdcdc" stroke-width="0.16" text-anchor="middle">X45</text>
<text x="525" y="299.04" font-size="2.95" fill="#dcdcdc" stroke="#dcdcdc" stroke-width="0.16" text-anchor="middle">X45</text>
<text x="525" y="310.39" font-size="2.95" fill="#dcdcdc" stroke="#dcdcdc" stroke-width="0.16" text-anchor="middle">X45</text>
<text x="525" y="321.74" font-size="2.95" fill="#dcdcdc" stroke="#dcdcdc" stroke-width="0.16" text-anchor="middle">X45</text>
<text x="525" y="333.09" font-size="2.95" fill="#dcdcdc" stroke="#dcdcdc" stroke-width="0.16" text-anchor="middle">X45</text>
<text x="538.6" y="191.41" font-size="2.95" fill="#10c020" stroke="#10c020" stroke-width="0.16" text-anchor="middle">X4L</text>
<text x="538.6" y="202.31" font-size="2.95" fill="#dcdcdc" stroke="#dcdcdc" stroke-width="0.16" text-anchor="middle">X45</text>
<text x="538.6" y="213.56" font-size="2.95" fill="#dcdcdc" stroke="#dcdcdc" stroke-width="0.16" text-anchor="middle">X45</text>
<text x="538.6" y="224.81" font-size="2.95" fill="#dcdcdc" stroke="#dcdcdc" stroke-width="0.16" text-anchor="middle">X45</text>
<text x="538.6" y="233.47" font-size="2.7" fill="#dcdcdc" stroke="#dcdcdc" stroke-width="0.16" text-anchor="middle">X4T</text>
<text x="538.6" y="242.31" font-size="2.95" fill="#dcdcdc" stroke="#dcdcdc" stroke-width="0.16" text-anchor="middle">X45</text>
<text x="538.6" y="253.64" font-size="2.95" fill="#dcdcdc" stroke="#dcdcdc" stroke-width="0.16" text-anchor="middle">X45</text>
<text x="538.6" y="264.99" font-size="2.95" fill="#dcdcdc" stroke="#dcdcdc" stroke-width="0.16" text-anchor="middle">X45</text>
<text x="538.6" y="276.34" font-size="2.95" fill="#dcdcdc" stroke="#dcdcdc" stroke-width="0.16" text-anchor="middle">X45</text>
<text x="538.6" y="287.69" font-size="2.95" fill="#dcdcdc" stroke="#dcdcdc" stroke-width="0.16" text-anchor="middle">X45</text>
<text x="538.6" y="299.04" font-size="2.95" fill="#dcdcdc" stroke="#dcdcdc" stroke-width="0.16" text-anchor="middle">X45</text>
<text x="538.6" y="310.39" font-size="2.95" fill="#dcdcdc" stroke="#dcdcdc" stroke-width="0.16" text-anchor="middle">X45</text>
<text x="538.6" y="321.74" font-size="2.95" fill="#dcdcdc" stroke="#dcdcdc" stroke-width="0.16" text-anchor="middle">X45</text>
<text x="538.6" y="332.59" font-size="2.95" fill="#10c020" stroke="#10c020" stroke-width="0.16" text-anchor="middle">X4L</text>
<text x="552.2" y="193.29" font-size="2.95" fill="#10c020" stroke="#10c020" stroke-width="0.16" text-anchor="middle">X4L</text>
<text x="552.2" y="202.31" font-size="2.95" fill="#dcdcdc" stroke="#dcdcdc" stroke-width="0.16" text-anchor="middle">X45</text>
<text x="552.2" y="213.56" font-size="2.95" fill="#dcdcdc" stroke="#dcdcdc" stroke-width="0.16" text-anchor="middle">X45</text>
<text x="552.2" y="224.81" font-size="2.95" fill="#dcdcdc" stroke="#dcdcdc" stroke-width="0.16" text-anchor="middle">X45</text>
<text x="552.2" y="233.47" font-size="2.7" fill="#dcdcdc" stroke="#dcdcdc" stroke-width="0.16" text-anchor="middle">X4T</text>
<text x="552.2" y="242.31" font-size="2.95" fill="#dcdcdc" stroke="#dcdcdc" stroke-width="0.16" text-anchor="middle">X45</text>
<text x="552.2" y="253.64" font-size="2.95" fill="#dcdcdc" stroke="#dcdcdc" stroke-width="0.16" text-anchor="middle">X45</text>
<text x="552.2" y="264.99" font-size="2.95" fill="#dcdcdc" stroke="#dcdcdc" stroke-width="0.16" text-anchor="middle">X45</text>
<text x="552.2" y="276.34" font-size="2.95" fill="#dcdcdc" stroke="#dcdcdc" stroke-width="0.16" text-anchor="middle">X45</text>
<text x="552.2" y="287.69" font-size="2.95" fill="#dcdcdc" stroke="#dcdcdc" stroke-width="0.16" text-anchor="middle">X45</text>
<text x="552.2" y="299.04" font-size="2.95" fill="#dcdcdc" stroke="#dcdcdc" stroke-width="0.16" text-anchor="middle">X45</text>
<text x="552.2" y="310.39" font-size="2.95" fill="#dcdcdc" stroke="#dcdcdc" stroke-width="0.16" text-anchor="middle">X45</text>
<text x="552.2" y="321.74" font-size="2.95" fill="#dcdcdc" stroke="#dcdcdc" stroke-width="0.16" text-anchor="middle">X45</text>
<text x="552.2" y="330.71" font-size="2.95" fill="#10c020" stroke="#10c020" stroke-width="0.16" text-anchor="middle">X4L</text>
<text x="565.8" y="202.31" font-size="2.95" fill="#dcdcdc" stroke="#dcdcdc" stroke-width="0.16" text-anchor="middle">X45</text>
<text x="565.8" y="213.56" font-size="2.95" fill="#dcdcdc" stroke="#dcdcdc" stroke-width="0.16" text-anchor="middle">X45</text>
<text x="565.8" y="224.81" font-size="2.95" fill="#dcdcdc" stroke="#dcdcdc" stroke-width="0.16" text-anchor="middle">X45</text>
<text x="565.8" y="233.47" font-size="2.7" fill="#dcdcdc" stroke="#dcdcdc" stroke-width="0.16" text-anchor="middle">X4T</text>
<text x="565.8" y="242.31" font-size="2.95" fill="#dcdcdc" stroke="#dcdcdc" stroke-width="0.16" text-anchor="middle">X45</text>
<text x="565.8" y="253.64" font-size="2.95" fill="#dcdcdc" stroke="#dcdcdc" stroke-width="0.16" text-anchor="middle">X45</text>
<text x="565.8" y="264.99" font-size="2.95" fill="#dcdcdc" stroke="#dcdcdc" stroke-width="0.16" text-anchor="middle">X45</text>
<text x="565.8" y="276.34" font-size="2.95" fill="#dcdcdc" stroke="#dcdcdc" stroke-width="0.16" text-anchor="middle">X45</text>
<text x="565.8" y="287.69" font-size="2.95" fill="#dcdcdc" stroke="#dcdcdc" stroke-width="0.16" text-anchor="middle">X45</text>
<text x="565.8" y="299.04" font-size="2.95" fill="#dcdcdc" stroke="#dcdcdc" stroke-width="0.16" text-anchor="middle">X45</text>
<text x="565.8" y="310.39" font-size="2.95" fill="#dcdcdc" stroke="#dcdcdc" stroke-width="0.16" text-anchor="middle">X45</text>
<text x="565.8" y="321.74" font-size="2.95" fill="#dcdcdc" stroke="#dcdcdc" stroke-width="0.16" text-anchor="middle">X45</text>
<text x="579.4" y="202.7" font-size="2.95" fill="#10c020" stroke="#10c020" stroke-width="0.16" text-anchor="middle">X4L</text>
<text x="579.4" y="213.56" font-size="2.95" fill="#dcdcdc" stroke="#dcdcdc" stroke-width="0.16" text-anchor="middle">X45</text>
<text x="579.4" y="224.81" font-size="2.95" fill="#dcdcdc" stroke="#dcdcdc" stroke-width="0.16" text-anchor="middle">X45</text>
<text x="579.4" y="233.47" font-size="2.7" fill="#dcdcdc" stroke="#dcdcdc" stroke-width="0.16" text-anchor="middle">X4T</text>
<text x="579.4" y="242.31" font-size="2.95" fill="#dcdcdc" stroke="#dcdcdc" stroke-width="0.16" text-anchor="middle">X45</text>
<text x="579.4" y="253.64" font-size="2.95" fill="#dcdcdc" stroke="#dcdcdc" stroke-width="0.16" text-anchor="middle">X45</text>
<text x="579.4" y="264.99" font-size="2.95" fill="#dcdcdc" stroke="#dcdcdc" stroke-width="0.16" text-anchor="middle">X45</text>
<text x="579.4" y="276.34" font-size="2.95" fill="#dcdcdc" stroke="#dcdcdc" stroke-width="0.16" text-anchor="middle">X45</text>
<text x="579.4" y="287.69" font-size="2.95" fill="#dcdcdc" stroke="#dcdcdc" stroke-width="0.16" text-anchor="middle">X45</text>
<text x="579.4" y="299.04" font-size="2.95" fill="#dcdcdc" stroke="#dcdcdc" stroke-width="0.16" text-anchor="middle">X45</text>
<text x="579.4" y="310.39" font-size="2.95" fill="#dcdcdc" stroke="#dcdcdc" stroke-width="0.16" text-anchor="middle">X45</text>
<text x="579.4" y="321.28" font-size="2.95" fill="#10c020" stroke="#10c020" stroke-width="0.16" text-anchor="middle">X4L</text>
<text x="593" y="204.58" font-size="2.95" fill="#10c020" stroke="#10c020" stroke-width="0.16" text-anchor="middle">X4L</text>
<text x="593" y="213.56" font-size="2.95" fill="#dcdcdc" stroke="#dcdcdc" stroke-width="0.16" text-anchor="middle">X45</text>
<text x="593" y="224.81" font-size="2.95" fill="#dcdcdc" stroke="#dcdcdc" stroke-width="0.16" text-anchor="middle">X45</text>
<text x="593" y="233.47" font-size="2.7" fill="#dcdcdc" stroke="#dcdcdc" stroke-width="0.16" text-anchor="middle">X4T</text>
<text x="593" y="242.31" font-size="2.95" fill="#dcdcdc" stroke="#dcdcdc" stroke-width="0.16" text-anchor="middle">X45</text>
<text x="593" y="253.64" font-size="2.95" fill="#dcdcdc" stroke="#dcdcdc" stroke-width="0.16" text-anchor="middle">X45</text>
<text x="593" y="264.99" font-size="2.95" fill="#dcdcdc" stroke="#dcdcdc" stroke-width="0.16" text-anchor="middle">X45</text>
<text x="593" y="276.34" font-size="2.95" fill="#dcdcdc" stroke="#dcdcdc" stroke-width="0.16" text-anchor="middle">X45</text>
<text x="593" y="287.69" font-size="2.95" fill="#dcdcdc" stroke="#dcdcdc" stroke-width="0.16" text-anchor="middle">X45</text>
<text x="593" y="299.04" font-size="2.95" fill="#dcdcdc" stroke="#dcdcdc" stroke-width="0.16" text-anchor="middle">X45</text>
<text x="593" y="310.39" font-size="2.95" fill="#dcdcdc" stroke="#dcdcdc" stroke-width="0.16" text-anchor="middle">X45</text>
<text x="593" y="319.4" font-size="2.95" fill="#10c020" stroke="#10c020" stroke-width="0.16" text-anchor="middle">X4L</text>
<text x="606.6" y="206.45" font-size="2.95" fill="#10c020" stroke="#10c020" stroke-width="0.16" text-anchor="middle">X4L</text>
<text x="606.6" y="213.56" font-size="2.95" fill="#dcdcdc" stroke="#dcdcdc" stroke-width="0.16" text-anchor="middle">X45</text>
<text x="606.6" y="224.81" font-size="2.95" fill="#dcdcdc" stroke="#dcdcdc" stroke-width="0.16" text-anchor="middle">X45</text>
<text x="606.6" y="233.47" font-size="2.7" fill="#dcdcdc" stroke="#dcdcdc" stroke-width="0.16" text-anchor="middle">X4T</text>
<text x="606.6" y="242.31" font-size="2.95" fill="#dcdcdc" stroke="#dcdcdc" stroke-width="0.16" text-anchor="middle">X45</text>
<text x="606.6" y="253.64" font-size="2.95" fill="#dcdcdc" stroke="#dcdcdc" stroke-width="0.16" text-anchor="middle">X45</text>
<text x="606.6" y="264.99" font-size="2.95" fill="#dcdcdc" stroke="#dcdcdc" stroke-width="0.16" text-anchor="middle">X45</text>
<text x="606.6" y="276.34" font-size="2.95" fill="#dcdcdc" stroke="#dcdcdc" stroke-width="0.16" text-anchor="middle">X45</text>
<text x="606.6" y="287.69" font-size="2.95" fill="#dcdcdc" stroke="#dcdcdc" stroke-width="0.16" text-anchor="middle">X45</text>
<text x="606.6" y="299.04" font-size="2.95" fill="#dcdcdc" stroke="#dcdcdc" stroke-width="0.16" text-anchor="middle">X45</text>
<text x="606.6" y="310.39" font-size="2.95" fill="#dcdcdc" stroke="#dcdcdc" stroke-width="0.16" text-anchor="middle">X45</text>
<text x="620.2" y="213.93" font-size="2.95" fill="#10c020" stroke="#10c020" stroke-width="0.16" text-anchor="middle">X4L</text>
<text x="620.2" y="224.81" font-size="2.95" fill="#dcdcdc" stroke="#dcdcdc" stroke-width="0.16" text-anchor="middle">X45</text>
<text x="620.2" y="233.47" font-size="2.7" fill="#dcdcdc" stroke="#dcdcdc" stroke-width="0.16" text-anchor="middle">X4T</text>
<text x="620.2" y="242.31" font-size="2.95" fill="#dcdcdc" stroke="#dcdcdc" stroke-width="0.16" text-anchor="middle">X45</text>
<text x="620.2" y="253.64" font-size="2.95" fill="#dcdcdc" stroke="#dcdcdc" stroke-width="0.16" text-anchor="middle">X45</text>
<text x="620.2" y="264.99" font-size="2.95" fill="#dcdcdc" stroke="#dcdcdc" stroke-width="0.16" text-anchor="middle">X45</text>
<text x="620.2" y="276.34" font-size="2.95" fill="#dcdcdc" stroke="#dcdcdc" stroke-width="0.16" text-anchor="middle">X45</text>
<text x="620.2" y="287.69" font-size="2.95" fill="#dcdcdc" stroke="#dcdcdc" stroke-width="0.16" text-anchor="middle">X45</text>
<text x="620.2" y="299.04" font-size="2.95" fill="#dcdcdc" stroke="#dcdcdc" stroke-width="0.16" text-anchor="middle">X45</text>
<text x="620.2" y="309.97" font-size="2.95" fill="#10c020" stroke="#10c020" stroke-width="0.16" text-anchor="middle">X4L</text>
<text x="633.8" y="215.81" font-size="2.95" fill="#10c020" stroke="#10c020" stroke-width="0.16" text-anchor="middle">X4L</text>
<text x="633.8" y="224.81" font-size="2.95" fill="#dcdcdc" stroke="#dcdcdc" stroke-width="0.16" text-anchor="middle">X45</text>
<text x="633.8" y="233.47" font-size="2.7" fill="#dcdcdc" stroke="#dcdcdc" stroke-width="0.16" text-anchor="middle">X4T</text>
<text x="633.8" y="242.31" font-size="2.95" fill="#dcdcdc" stroke="#dcdcdc" stroke-width="0.16" text-anchor="middle">X45</text>
<text x="633.8" y="253.64" font-size="2.95" fill="#dcdcdc" stroke="#dcdcdc" stroke-width="0.16" text-anchor="middle">X45</text>
<text x="633.8" y="264.99" font-size="2.95" fill="#dcdcdc" stroke="#dcdcdc" stroke-width="0.16" text-anchor="middle">X45</text>
<text x="633.8" y="276.34" font-size="2.95" fill="#dcdcdc" stroke="#dcdcdc" stroke-width="0.16" text-anchor="middle">X45</text>
<text x="633.8" y="287.69" font-size="2.95" fill="#dcdcdc" stroke="#dcdcdc" stroke-width="0.16" text-anchor="middle">X45</text>
<text x="633.8" y="299.04" font-size="2.95" fill="#dcdcdc" stroke="#dcdcdc" stroke-width="0.16" text-anchor="middle">X45</text>
<text x="633.8" y="308.09" font-size="2.95" fill="#10c020" stroke="#10c020" stroke-width="0.16" text-anchor="middle">X4L</text>
<text x="647.4" y="224.81" font-size="2.95" fill="#dcdcdc" stroke="#dcdcdc" stroke-width="0.16" text-anchor="middle">X45</text>
<text x="647.4" y="233.47" font-size="2.7" fill="#dcdcdc" stroke="#dcdcdc" stroke-width="0.16" text-anchor="middle">X4T</text>
<text x="647.4" y="242.31" font-size="2.95" fill="#dcdcdc" stroke="#dcdcdc" stroke-width="0.16" text-anchor="middle">X45</text>
<text x="647.4" y="253.64" font-size="2.95" fill="#dcdcdc" stroke="#dcdcdc" stroke-width="0.16" text-anchor="middle">X45</text>
<text x="647.4" y="264.99" font-size="2.95" fill="#dcdcdc" stroke="#dcdcdc" stroke-width="0.16" text-anchor="middle">X45</text>
<text x="647.4" y="276.34" font-size="2.95" fill="#dcdcdc" stroke="#dcdcdc" stroke-width="0.16" text-anchor="middle">X45</text>
<text x="647.4" y="287.69" font-size="2.95" fill="#dcdcdc" stroke="#dcdcdc" stroke-width="0.16" text-anchor="middle">X45</text>
<text x="647.4" y="299.04" font-size="2.95" fill="#dcdcdc" stroke="#dcdcdc" stroke-width="0.16" text-anchor="middle">X45</text>
<text x="661" y="225.22" font-size="2.95" fill="#10c020" stroke="#10c020" stroke-width="0.16" text-anchor="middle">X4L</text>
<text x="661" y="233.47" font-size="2.7" fill="#dcdcdc" stroke="#dcdcdc" stroke-width="0.16" text-anchor="middle">X4T</text>
<text x="661" y="242.31" font-size="2.95" fill="#dcdcdc" stroke="#dcdcdc" stroke-width="0.16" text-anchor="middle">X45</text>
<text x="661" y="253.64" font-size="2.95" fill="#dcdcdc" stroke="#dcdcdc" stroke-width="0.16" text-anchor="middle">X45</text>
<text x="661" y="264.99" font-size="2.95" fill="#dcdcdc" stroke="#dcdcdc" stroke-width="0.16" text-anchor="middle">X45</text>
<text x="661" y="276.34" font-size="2.95" fill="#dcdcdc" stroke="#dcdcdc" stroke-width="0.16" text-anchor="middle">X45</text>
<text x="661" y="287.69" font-size="2.95" fill="#dcdcdc" stroke="#dcdcdc" stroke-width="0.16" text-anchor="middle">X45</text>
<text x="661" y="298.66" font-size="2.95" fill="#10c020" stroke="#10c020" stroke-width="0.16" text-anchor="middle">X4L</text>
<text x="674.6" y="227.1" font-size="2.95" fill="#10c020" stroke="#10c020" stroke-width="0.16" text-anchor="middle">X4L</text>
<text x="674.6" y="233.47" font-size="2.7" fill="#dcdcdc" stroke="#dcdcdc" stroke-width="0.16" text-anchor="middle">X4T</text>
<text x="674.6" y="242.31" font-size="2.95" fill="#dcdcdc" stroke="#dcdcdc" stroke-width="0.16" text-anchor="middle">X45</text>
<text x="674.6" y="253.64" font-size="2.95" fill="#dcdcdc" stroke="#dcdcdc" stroke-width="0.16" text-anchor="middle">X45</text>
<text x="674.6" y="264.99" font-size="2.95" fill="#dcdcdc" stroke="#dcdcdc" stroke-width="0.16" text-anchor="middle">X45</text>
<text x="674.6" y="276.34" font-size="2.95" fill="#dcdcdc" stroke="#dcdcdc" stroke-width="0.16" text-anchor="middle">X45</text>
<text x="674.6" y="287.69" font-size="2.95" fill="#dcdcdc" stroke="#dcdcdc" stroke-width="0.16" text-anchor="middle">X45</text>
<text x="674.6" y="296.78" font-size="2.95" fill="#10c020" stroke="#10c020" stroke-width="0.16" text-anchor="middle">X4L</text>
<text x="688.2" y="233.47" font-size="2.7" fill="#dcdcdc" stroke="#dcdcdc" stroke-width="0.16" text-anchor="middle">X4T</text>
<text x="688.2" y="242.31" font-size="2.95" fill="#dcdcdc" stroke="#dcdcdc" stroke-width="0.16" text-anchor="middle">X45</text>
<text x="688.2" y="253.64" font-size="2.95" fill="#dcdcdc" stroke="#dcdcdc" stroke-width="0.16" text-anchor="middle">X45</text>
<text x="688.2" y="264.99" font-size="2.95" fill="#dcdcdc" stroke="#dcdcdc" stroke-width="0.16" text-anchor="middle">X45</text>
<text x="688.2" y="276.34" font-size="2.95" fill="#dcdcdc" stroke="#dcdcdc" stroke-width="0.16" text-anchor="middle">X45</text>
<text x="688.2" y="287.69" font-size="2.95" fill="#dcdcdc" stroke="#dcdcdc" stroke-width="0.16" text-anchor="middle">X45</text>
<text x="688.2" y="294.9" font-size="2.95" fill="#10c020" stroke="#10c020" stroke-width="0.16" text-anchor="middle">X4L</text>
<text x="701.8" y="233.86" font-size="2.7" fill="#10c020" stroke="#10c020" stroke-width="0.16" text-anchor="middle">X4L</text>
<text x="701.8" y="242.31" font-size="2.95" fill="#dcdcdc" stroke="#dcdcdc" stroke-width="0.16" text-anchor="middle">X45</text>
<text x="701.8" y="253.64" font-size="2.95" fill="#dcdcdc" stroke="#dcdcdc" stroke-width="0.16" text-anchor="middle">X45</text>
<text x="701.8" y="264.99" font-size="2.95" fill="#dcdcdc" stroke="#dcdcdc" stroke-width="0.16" text-anchor="middle">X45</text>
<text x="701.8" y="276.34" font-size="2.95" fill="#dcdcdc" stroke="#dcdcdc" stroke-width="0.16" text-anchor="middle">X45</text>
<text x="701.8" y="287.35" font-size="2.95" fill="#10c020" stroke="#10c020" stroke-width="0.16" text-anchor="middle">X4L</text>
<text x="715.4" y="242.31" font-size="2.95" fill="#10c020" stroke="#10c020" stroke-width="0.16" text-anchor="middle">X4L</text>
<text x="715.4" y="253.64" font-size="2.95" fill="#dcdcdc" stroke="#dcdcdc" stroke-width="0.16" text-anchor="middle">X45</text>
<text x="715.4" y="264.99" font-size="2.95" fill="#dcdcdc" stroke="#dcdcdc" stroke-width="0.16" text-anchor="middle">X45</text>
<text x="715.4" y="276.34" font-size="2.95" fill="#dcdcdc" stroke="#dcdcdc" stroke-width="0.16" text-anchor="middle">X45</text>
<text x="715.4" y="285.47" font-size="2.95" fill="#10c020" stroke="#10c020" stroke-width="0.16" text-anchor="middle">X4L</text>
<text x="730.35" y="243.54" font-size="2.95" fill="#d08a10" stroke="#d08a10" stroke-width="0.16" text-anchor="middle">X45</text>
<text x="730.35" y="253.64" font-size="2.95" fill="#d08a10" stroke="#d08a10" stroke-width="0.16" text-anchor="middle">X45</text>
<text x="730.35" y="264.99" font-size="2.95" fill="#d08a10" stroke="#d08a10" stroke-width="0.16" text-anchor="middle">X45</text>
<text x="730.35" y="276.34" font-size="2.95" fill="#d08a10" stroke="#d08a10" stroke-width="0.16" text-anchor="middle">X45</text>
<rect x="382.9" y="120" width="1.8" height="290" fill="#7620cc"/>
<rect x="394.9" y="120" width="1.8" height="290" fill="#7620cc"/>
<rect x="408.5" y="120" width="1.8" height="290" fill="#7620cc"/>
<rect x="422.1" y="120" width="1.8" height="290" fill="#7620cc"/>
<rect x="435.7" y="120" width="1.8" height="290" fill="#7620cc"/>
<rect x="449.3" y="120" width="1.8" height="290" fill="#7620cc"/>
<rect x="462.9" y="120" width="1.8" height="290" fill="#7620cc"/>
<rect x="476.5" y="120" width="1.8" height="290" fill="#7620cc"/>
<rect x="490.1" y="120" width="1.8" height="290" fill="#7620cc"/>
<rect x="503.7" y="120" width="1.8" height="290" fill="#7620cc"/>
<rect x="517.3" y="120" width="1.8" height="290" fill="#7620cc"/>
<rect x="530.9" y="120" width="1.8" height="290" fill="#7620cc"/>
<rect x="544.5" y="120" width="1.8" height="290" fill="#7620cc"/>
<rect x="558.1" y="120" width="1.8" height="290" fill="#7620cc"/>
<rect x="571.7" y="120" width="1.8" height="290" fill="#7620cc"/>
<rect x="585.3" y="120" width="1.8" height="290" fill="#7620cc"/>
<rect x="598.9" y="120" width="1.8" height="290" fill="#7620cc"/>
<rect x="612.5" y="120" width="1.8" height="290" fill="#7620cc"/>
<rect x="626.1" y="120" width="1.8" height="290" fill="#7620cc"/>
<rect x="639.7" y="120" width="1.8" height="290" fill="#7620cc"/>
<rect x="653.3" y="120" width="1.8" height="290" fill="#7620cc"/>
<rect x="666.9" y="120" width="1.8" height="290" fill="#7620cc"/>
<rect x="680.5" y="120" width="1.8" height="290" fill="#7620cc"/>
<rect x="694.1" y="120" width="1.8" height="290" fill="#7620cc"/>
<rect x="707.7" y="120" width="1.8" height="290" fill="#7620cc"/>
<rect x="721.3" y="120" width="1.8" height="290" fill="#7620cc"/>
<rect x="737.6" y="120" width="1.8" height="290" fill="#7620cc"/>
<rect x="380" y="149.5" width="362" height="1.8" fill="#7620cc"/>
<rect x="380" y="160.8" width="362" height="1.8" fill="#7620cc"/>
<rect x="380" y="172.1" width="362" height="1.8" fill="#7620cc"/>
<rect x="380" y="183.4" width="362" height="1.8" fill="#7620cc"/>
<rect x="380" y="194.7" width="362" height="1.8" fill="#7620cc"/>
<rect x="380" y="206" width="362" height="1.8" fill="#7620cc"/>
<rect x="380" y="217.2" width="362" height="1.8" fill="#7620cc"/>
<rect x="380" y="228.5" width="362" height="1.8" fill="#7620cc"/>
<rect x="380" y="234.7" width="362" height="1.8" fill="#7620cc"/>
<rect x="380" y="246" width="362" height="1.8" fill="#7620cc"/>
<rect x="380" y="257.35" width="362" height="1.8" fill="#7620cc"/>
<rect x="380" y="268.7" width="362" height="1.8" fill="#7620cc"/>
<rect x="380" y="280.05" width="362" height="1.8" fill="#7620cc"/>
<rect x="380" y="291.4" width="362" height="1.8" fill="#7620cc"/>
<rect x="380" y="302.75" width="362" height="1.8" fill="#7620cc"/>
<rect x="380" y="314.1" width="362" height="1.8" fill="#7620cc"/>
<rect x="380" y="325.45" width="362" height="1.8" fill="#7620cc"/>
<rect x="380" y="336.8" width="362" height="1.8" fill="#7620cc"/>
<rect x="380" y="348.15" width="362" height="1.8" fill="#7620cc"/>
<rect x="380" y="359.5" width="362" height="1.8" fill="#7620cc"/>
<rect x="380" y="370.85" width="362" height="1.8" fill="#7620cc"/>
</g>
<rect x="383.5" y="217.7" width="62.1" height="57.7" fill="#000" stroke="#b070d0" stroke-width="1"/>
<line x1="383" y1="142.13" x2="740" y2="240.73" stroke="#7620cc" stroke-width="1.6"/>
<line x1="383" y1="379.67" x2="740" y2="281.07" stroke="#7620cc" stroke-width="1.6"/>
<polygon points="384.4,139.71 395,142.64 395,145.44 384.4,142.51" fill="none" stroke="#7620cc" stroke-width="1.1"/>
<rect x="385" y="140.31" width="2.4" height="1.5" fill="#f0f0f0"/>
<polygon points="384.4,382.09 395,379.16 395,376.36 384.4,379.29" fill="none" stroke="#7620cc" stroke-width="1.1"/>
<rect x="385" y="379.99" width="2.4" height="1.5" fill="#f0f0f0"/>
<polygon points="396.4,143.03 407.6,146.12 407.6,148.92 396.4,145.83" fill="none" stroke="#7620cc" stroke-width="1.1"/>
<rect x="397" y="143.63" width="2.4" height="1.5" fill="#f0f0f0"/>
<polygon points="396.4,378.77 407.6,375.68 407.6,372.88 396.4,375.97" fill="none" stroke="#7620cc" stroke-width="1.1"/>
<rect x="397" y="376.67" width="2.4" height="1.5" fill="#f0f0f0"/>
<polygon points="410,146.78 421.2,149.88 421.2,152.68 410,149.58" fill="none" stroke="#7620cc" stroke-width="1.1"/>
<rect x="410.6" y="147.38" width="2.4" height="1.5" fill="#f0f0f0"/>
<polygon points="410,375.02 421.2,371.92 421.2,369.12 410,372.22" fill="none" stroke="#7620cc" stroke-width="1.1"/>
<rect x="410.6" y="372.92" width="2.4" height="1.5" fill="#f0f0f0"/>
<polygon points="423.6,150.54 434.8,153.63 434.8,156.43 423.6,153.34" fill="none" stroke="#7620cc" stroke-width="1.1"/>
<rect x="424.2" y="151.14" width="2.4" height="1.5" fill="#f0f0f0"/>
<polygon points="423.6,371.26 434.8,368.17 434.8,365.37 423.6,368.46" fill="none" stroke="#7620cc" stroke-width="1.1"/>
<rect x="424.2" y="369.16" width="2.4" height="1.5" fill="#f0f0f0"/>
<polygon points="437.2,154.3 448.4,157.39 448.4,160.19 437.2,157.1" fill="none" stroke="#7620cc" stroke-width="1.1"/>
<rect x="437.8" y="154.9" width="2.4" height="1.5" fill="#f0f0f0"/>
<polygon points="437.2,367.5 448.4,364.41 448.4,361.61 437.2,364.7" fill="none" stroke="#7620cc" stroke-width="1.1"/>
<rect x="437.8" y="365.4" width="2.4" height="1.5" fill="#f0f0f0"/>
<polygon points="450.8,158.05 462,161.15 462,163.95 450.8,160.85" fill="none" stroke="#7620cc" stroke-width="1.1"/>
<rect x="451.4" y="158.65" width="2.4" height="1.5" fill="#f0f0f0"/>
<polygon points="450.8,363.75 462,360.65 462,357.85 450.8,360.95" fill="none" stroke="#7620cc" stroke-width="1.1"/>
<rect x="451.4" y="361.65" width="2.4" height="1.5" fill="#f0f0f0"/>
<polygon points="464.4,161.81 475.6,164.9 475.6,167.7 464.4,164.61" fill="none" stroke="#7620cc" stroke-width="1.1"/>
<rect x="465" y="162.41" width="2.4" height="1.5" fill="#f0f0f0"/>
<polygon points="464.4,359.99 475.6,356.9 475.6,354.1 464.4,357.19" fill="none" stroke="#7620cc" stroke-width="1.1"/>
<rect x="465" y="357.89" width="2.4" height="1.5" fill="#f0f0f0"/>
<polygon points="478,165.57 489.2,168.66 489.2,171.46 478,168.37" fill="none" stroke="#7620cc" stroke-width="1.1"/>
<rect x="478.6" y="166.17" width="2.4" height="1.5" fill="#f0f0f0"/>
<polygon points="478,356.23 489.2,353.14 489.2,350.34 478,353.43" fill="none" stroke="#7620cc" stroke-width="1.1"/>
<rect x="478.6" y="354.13" width="2.4" height="1.5" fill="#f0f0f0"/>
<polygon points="491.6,169.32 502.8,172.42 502.8,175.22 491.6,172.12" fill="none" stroke="#7620cc" stroke-width="1.1"/>
<rect x="492.2" y="169.92" width="2.4" height="1.5" fill="#f0f0f0"/>
<polygon points="491.6,352.48 502.8,349.38 502.8,346.58 491.6,349.68" fill="none" stroke="#7620cc" stroke-width="1.1"/>
<rect x="492.2" y="350.38" width="2.4" height="1.5" fill="#f0f0f0"/>
<polygon points="505.2,173.08 516.4,176.17 516.4,178.97 505.2,175.88" fill="none" stroke="#7620cc" stroke-width="1.1"/>
<rect x="505.8" y="173.68" width="2.4" height="1.5" fill="#f0f0f0"/>
<polygon points="505.2,348.72 516.4,345.63 516.4,342.83 505.2,345.92" fill="none" stroke="#7620cc" stroke-width="1.1"/>
<rect x="505.8" y="346.62" width="2.4" height="1.5" fill="#f0f0f0"/>
<polygon points="518.8,176.83 530,179.93 530,182.73 518.8,179.63" fill="none" stroke="#7620cc" stroke-width="1.1"/>
<rect x="519.4" y="177.43" width="2.4" height="1.5" fill="#f0f0f0"/>
<polygon points="518.8,344.97 530,341.87 530,339.07 518.8,342.17" fill="none" stroke="#7620cc" stroke-width="1.1"/>
<rect x="519.4" y="342.87" width="2.4" height="1.5" fill="#f0f0f0"/>
<polygon points="532.4,180.59 543.6,183.68 543.6,186.48 532.4,183.39" fill="none" stroke="#7620cc" stroke-width="1.1"/>
<rect x="533" y="181.19" width="2.4" height="1.5" fill="#f0f0f0"/>
<polygon points="532.4,341.21 543.6,338.12 543.6,335.32 532.4,338.41" fill="none" stroke="#7620cc" stroke-width="1.1"/>
<rect x="533" y="339.11" width="2.4" height="1.5" fill="#f0f0f0"/>
<polygon points="546,184.35 557.2,187.44 557.2,190.24 546,187.15" fill="none" stroke="#7620cc" stroke-width="1.1"/>
<rect x="546.6" y="184.95" width="2.4" height="1.5" fill="#f0f0f0"/>
<polygon points="546,337.45 557.2,334.36 557.2,331.56 546,334.65" fill="none" stroke="#7620cc" stroke-width="1.1"/>
<rect x="546.6" y="335.35" width="2.4" height="1.5" fill="#f0f0f0"/>
<polygon points="559.6,188.1 570.8,191.2 570.8,194 559.6,190.9" fill="none" stroke="#7620cc" stroke-width="1.1"/>
<rect x="560.2" y="188.7" width="2.4" height="1.5" fill="#f0f0f0"/>
<polygon points="559.6,333.7 570.8,330.6 570.8,327.8 559.6,330.9" fill="none" stroke="#7620cc" stroke-width="1.1"/>
<rect x="560.2" y="331.6" width="2.4" height="1.5" fill="#f0f0f0"/>
<polygon points="573.2,191.86 584.4,194.95 584.4,197.75 573.2,194.66" fill="none" stroke="#7620cc" stroke-width="1.1"/>
<rect x="573.8" y="192.46" width="2.4" height="1.5" fill="#f0f0f0"/>
<polygon points="573.2,329.94 584.4,326.85 584.4,324.05 573.2,327.14" fill="none" stroke="#7620cc" stroke-width="1.1"/>
<rect x="573.8" y="327.84" width="2.4" height="1.5" fill="#f0f0f0"/>
<polygon points="586.8,195.62 598,198.71 598,201.51 586.8,198.42" fill="none" stroke="#7620cc" stroke-width="1.1"/>
<rect x="587.4" y="196.22" width="2.4" height="1.5" fill="#f0f0f0"/>
<polygon points="586.8,326.18 598,323.09 598,320.29 586.8,323.38" fill="none" stroke="#7620cc" stroke-width="1.1"/>
<rect x="587.4" y="324.08" width="2.4" height="1.5" fill="#f0f0f0"/>
<polygon points="600.4,199.37 611.6,202.47 611.6,205.27 600.4,202.17" fill="none" stroke="#7620cc" stroke-width="1.1"/>
<rect x="601" y="199.97" width="2.4" height="1.5" fill="#f0f0f0"/>
<polygon points="600.4,322.43 611.6,319.33 611.6,316.53 600.4,319.63" fill="none" stroke="#7620cc" stroke-width="1.1"/>
<rect x="601" y="320.33" width="2.4" height="1.5" fill="#f0f0f0"/>
<polygon points="614,203.13 625.2,206.22 625.2,209.02 614,205.93" fill="none" stroke="#7620cc" stroke-width="1.1"/>
<rect x="614.6" y="203.73" width="2.4" height="1.5" fill="#f0f0f0"/>
<polygon points="614,318.67 625.2,315.58 625.2,312.78 614,315.87" fill="none" stroke="#7620cc" stroke-width="1.1"/>
<rect x="614.6" y="316.57" width="2.4" height="1.5" fill="#f0f0f0"/>
<polygon points="627.6,206.89 638.8,209.98 638.8,212.78 627.6,209.69" fill="none" stroke="#7620cc" stroke-width="1.1"/>
<rect x="628.2" y="207.49" width="2.4" height="1.5" fill="#f0f0f0"/>
<polygon points="627.6,314.91 638.8,311.82 638.8,309.02 627.6,312.11" fill="none" stroke="#7620cc" stroke-width="1.1"/>
<rect x="628.2" y="312.81" width="2.4" height="1.5" fill="#f0f0f0"/>
<polygon points="641.2,210.64 652.4,213.74 652.4,216.54 641.2,213.44" fill="none" stroke="#7620cc" stroke-width="1.1"/>
<rect x="641.8" y="211.24" width="2.4" height="1.5" fill="#f0f0f0"/>
<polygon points="641.2,311.16 652.4,308.06 652.4,305.26 641.2,308.36" fill="none" stroke="#7620cc" stroke-width="1.1"/>
<rect x="641.8" y="309.06" width="2.4" height="1.5" fill="#f0f0f0"/>
<polygon points="654.8,214.4 666,217.49 666,220.29 654.8,217.2" fill="none" stroke="#7620cc" stroke-width="1.1"/>
<rect x="655.4" y="215" width="2.4" height="1.5" fill="#f0f0f0"/>
<polygon points="654.8,307.4 666,304.31 666,301.51 654.8,304.6" fill="none" stroke="#7620cc" stroke-width="1.1"/>
<rect x="655.4" y="305.3" width="2.4" height="1.5" fill="#f0f0f0"/>
<polygon points="668.4,218.15 679.6,221.25 679.6,224.05 668.4,220.95" fill="none" stroke="#7620cc" stroke-width="1.1"/>
<rect x="669" y="218.75" width="2.4" height="1.5" fill="#f0f0f0"/>
<polygon points="668.4,303.65 679.6,300.55 679.6,297.75 668.4,300.85" fill="none" stroke="#7620cc" stroke-width="1.1"/>
<rect x="669" y="301.55" width="2.4" height="1.5" fill="#f0f0f0"/>
<polygon points="682,221.91 693.2,225 693.2,227.8 682,224.71" fill="none" stroke="#7620cc" stroke-width="1.1"/>
<rect x="682.6" y="222.51" width="2.4" height="1.5" fill="#f0f0f0"/>
<polygon points="682,299.89 693.2,296.8 693.2,294 682,297.09" fill="none" stroke="#7620cc" stroke-width="1.1"/>
<rect x="682.6" y="297.79" width="2.4" height="1.5" fill="#f0f0f0"/>
<polygon points="695.6,225.67 706.8,228.76 706.8,231.56 695.6,228.47" fill="none" stroke="#7620cc" stroke-width="1.1"/>
<rect x="696.2" y="226.27" width="2.4" height="1.5" fill="#f0f0f0"/>
<polygon points="695.6,296.13 706.8,293.04 706.8,290.24 695.6,293.33" fill="none" stroke="#7620cc" stroke-width="1.1"/>
<rect x="696.2" y="294.03" width="2.4" height="1.5" fill="#f0f0f0"/>
<polygon points="709.2,229.42 720.4,232.52 720.4,235.32 709.2,232.22" fill="none" stroke="#7620cc" stroke-width="1.1"/>
<rect x="709.8" y="230.02" width="2.4" height="1.5" fill="#f0f0f0"/>
<polygon points="709.2,292.38 720.4,289.28 720.4,286.48 709.2,289.58" fill="none" stroke="#7620cc" stroke-width="1.1"/>
<rect x="709.8" y="290.28" width="2.4" height="1.5" fill="#f0f0f0"/>
<polygon points="722.8,233.18 734,236.27 734,239.07 722.8,235.98" fill="none" stroke="#7620cc" stroke-width="1.1"/>
<rect x="723.4" y="233.78" width="2.4" height="1.5" fill="#f0f0f0"/>
<polygon points="722.8,288.62 734,285.53 734,282.73 722.8,285.82" fill="none" stroke="#7620cc" stroke-width="1.1"/>
<rect x="723.4" y="286.52" width="2.4" height="1.5" fill="#f0f0f0"/>
<line x1="383" y1="133.53" x2="742" y2="232.68" stroke="#7620cc" stroke-width="3.2" stroke-linecap="round"/>
<line x1="383" y1="388.27" x2="742" y2="289.12" stroke="#7620cc" stroke-width="3.2" stroke-linecap="round"/>
<line x1="384" y1="133.8" x2="741" y2="232.41" stroke="#1a0630" stroke-width="0.9"/>
<line x1="384" y1="388" x2="741" y2="289.39" stroke="#1a0630" stroke-width="0.9"/>
<rect x="384.3" y="133.52" width="2.4" height="1.4" fill="#f4f4f4"/>
<rect x="384.3" y="386.88" width="2.4" height="1.4" fill="#f4f4f4"/>
<rect x="397.4" y="137.14" width="2.4" height="1.4" fill="#f4f4f4"/>
<rect x="397.4" y="383.26" width="2.4" height="1.4" fill="#f4f4f4"/>
<rect x="410.5" y="140.75" width="2.4" height="1.4" fill="#f4f4f4"/>
<rect x="410.5" y="379.65" width="2.4" height="1.4" fill="#f4f4f4"/>
<rect x="423.6" y="144.37" width="2.4" height="1.4" fill="#f4f4f4"/>
<rect x="423.6" y="376.03" width="2.4" height="1.4" fill="#f4f4f4"/>
<rect x="436.7" y="147.99" width="2.4" height="1.4" fill="#f4f4f4"/>
<rect x="436.7" y="372.41" width="2.4" height="1.4" fill="#f4f4f4"/>
<rect x="449.8" y="151.61" width="2.4" height="1.4" fill="#f4f4f4"/>
<rect x="449.8" y="368.79" width="2.4" height="1.4" fill="#f4f4f4"/>
<rect x="462.9" y="155.23" width="2.4" height="1.4" fill="#f4f4f4"/>
<rect x="462.9" y="365.17" width="2.4" height="1.4" fill="#f4f4f4"/>
<rect x="476" y="158.84" width="2.4" height="1.4" fill="#f4f4f4"/>
<rect x="476" y="361.56" width="2.4" height="1.4" fill="#f4f4f4"/>
<rect x="489.1" y="162.46" width="2.4" height="1.4" fill="#f4f4f4"/>
<rect x="489.1" y="357.94" width="2.4" height="1.4" fill="#f4f4f4"/>
<rect x="502.2" y="166.08" width="2.4" height="1.4" fill="#f4f4f4"/>
<rect x="502.2" y="354.32" width="2.4" height="1.4" fill="#f4f4f4"/>
<rect x="515.3" y="169.7" width="2.4" height="1.4" fill="#f4f4f4"/>
<rect x="515.3" y="350.7" width="2.4" height="1.4" fill="#f4f4f4"/>
<rect x="528.4" y="173.32" width="2.4" height="1.4" fill="#f4f4f4"/>
<rect x="528.4" y="347.08" width="2.4" height="1.4" fill="#f4f4f4"/>
<rect x="541.5" y="176.94" width="2.4" height="1.4" fill="#f4f4f4"/>
<rect x="541.5" y="343.46" width="2.4" height="1.4" fill="#f4f4f4"/>
<rect x="554.6" y="180.55" width="2.4" height="1.4" fill="#f4f4f4"/>
<rect x="554.6" y="339.85" width="2.4" height="1.4" fill="#f4f4f4"/>
<rect x="567.7" y="184.17" width="2.4" height="1.4" fill="#f4f4f4"/>
<rect x="567.7" y="336.23" width="2.4" height="1.4" fill="#f4f4f4"/>
<rect x="580.8" y="187.79" width="2.4" height="1.4" fill="#f4f4f4"/>
<rect x="580.8" y="332.61" width="2.4" height="1.4" fill="#f4f4f4"/>
<rect x="593.9" y="191.41" width="2.4" height="1.4" fill="#f4f4f4"/>
<rect x="593.9" y="328.99" width="2.4" height="1.4" fill="#f4f4f4"/>
<rect x="607" y="195.03" width="2.4" height="1.4" fill="#f4f4f4"/>
<rect x="607" y="325.37" width="2.4" height="1.4" fill="#f4f4f4"/>
<rect x="620.1" y="198.65" width="2.4" height="1.4" fill="#f4f4f4"/>
<rect x="620.1" y="321.75" width="2.4" height="1.4" fill="#f4f4f4"/>
<rect x="633.2" y="202.26" width="2.4" height="1.4" fill="#f4f4f4"/>
<rect x="633.2" y="318.14" width="2.4" height="1.4" fill="#f4f4f4"/>
<rect x="646.3" y="205.88" width="2.4" height="1.4" fill="#f4f4f4"/>
<rect x="646.3" y="314.52" width="2.4" height="1.4" fill="#f4f4f4"/>
<rect x="659.4" y="209.5" width="2.4" height="1.4" fill="#f4f4f4"/>
<rect x="659.4" y="310.9" width="2.4" height="1.4" fill="#f4f4f4"/>
<rect x="672.5" y="213.12" width="2.4" height="1.4" fill="#f4f4f4"/>
<rect x="672.5" y="307.28" width="2.4" height="1.4" fill="#f4f4f4"/>
<rect x="685.6" y="216.74" width="2.4" height="1.4" fill="#f4f4f4"/>
<rect x="685.6" y="303.66" width="2.4" height="1.4" fill="#f4f4f4"/>
<rect x="698.7" y="220.35" width="2.4" height="1.4" fill="#f4f4f4"/>
<rect x="698.7" y="300.05" width="2.4" height="1.4" fill="#f4f4f4"/>
<rect x="711.8" y="223.97" width="2.4" height="1.4" fill="#f4f4f4"/>
<rect x="711.8" y="296.43" width="2.4" height="1.4" fill="#f4f4f4"/>
<rect x="724.9" y="227.59" width="2.4" height="1.4" fill="#f4f4f4"/>
<rect x="724.9" y="292.81" width="2.4" height="1.4" fill="#f4f4f4"/>
<rect x="738" y="231.21" width="2.4" height="1.4" fill="#f4f4f4"/>
<rect x="738" y="289.19" width="2.4" height="1.4" fill="#f4f4f4"/>
<polyline points="747.5,237.5 375.3,134.7 375.3,387.1 747.5,284.3 747.5,237.5" fill="none" stroke="#a8a8a8" stroke-width="1.1"/>
<rect x="560.6" y="120.4" width="1.3" height="281" fill="#668690"/>
<rect x="361" y="260.3" width="400" height="1.3" fill="#668690"/>
<circle cx="545.6" cy="246.9" r="9.2" fill="#000" stroke="#a050d8" stroke-width="1"/>
<g font-family="Liberation Sans" font-weight="bold" font-size="2.8" fill="#e0e0e0" stroke="#e0e0e0" stroke-width="0.2" text-anchor="middle">
<text x="535.6" y="240.6">X12</text>
<text x="555.6" y="240.6">X12</text>
<text x="535.6" y="255">X12</text>
<text x="555.6" y="255">X12</text>
</g>
<rect x="559.6" y="246.8" width="13" height="11" fill="none" stroke="#20a8b8" stroke-width="1.2"/>
<polyline points="548,258.2 559.4,258.2 559.4,268" fill="none" stroke="#c05030" stroke-width="1"/>
<rect x="396" y="161.8" width="13.2" height="11" fill="none" stroke="#b08030" stroke-width="1.2"/>
<rect x="364.2" y="138.3" width="3.3" height="245" fill="none" stroke="#1a9a4a" stroke-width="1"/>
<line x1="364.2" y1="148.8" x2="367.5" y2="148.8" stroke="#1a9a4a" stroke-width="1"/>
<rect x="365.05" y="142.75" width="1.6" height="1.6" fill="#e8e8e8"/>
<line x1="364.2" y1="159.3" x2="367.5" y2="159.3" stroke="#1a9a4a" stroke-width="1"/>
<rect x="365.05" y="153.25" width="1.6" height="1.6" fill="#e8e8e8"/>
<line x1="364.2" y1="169.8" x2="367.5" y2="169.8" stroke="#1a9a4a" stroke-width="1"/>
<rect x="365.05" y="163.75" width="1.6" height="1.6" fill="#e8e8e8"/>
<line x1="364.2" y1="180.3" x2="367.5" y2="180.3" stroke="#1a9a4a" stroke-width="1"/>
<rect x="365.05" y="174.25" width="1.6" height="1.6" fill="#e8e8e8"/>
<line x1="364.2" y1="190.8" x2="367.5" y2="190.8" stroke="#1a9a4a" stroke-width="1"/>
<rect x="365.05" y="184.75" width="1.6" height="1.6" fill="#e8e8e8"/>
<line x1="364.2" y1="201.3" x2="367.5" y2="201.3" stroke="#1a9a4a" stroke-width="1"/>
<rect x="365.05" y="195.25" width="1.6" height="1.6" fill="#e8e8e8"/>
<line x1="364.2" y1="211.8" x2="367.5" y2="211.8" stroke="#1a9a4a" stroke-width="1"/>
<rect x="365.05" y="205.75" width="1.6" height="1.6" fill="#e8e8e8"/>
<line x1="364.2" y1="222.3" x2="367.5" y2="222.3" stroke="#1a9a4a" stroke-width="1"/>
<rect x="365.05" y="216.25" width="1.6" height="1.6" fill="#e8e8e8"/>
<line x1="364.2" y1="232.8" x2="367.5" y2="232.8" stroke="#1a9a4a" stroke-width="1"/>
<rect x="365.05" y="226.75" width="1.6" height="1.6" fill="#e8e8e8"/>
<line x1="364.2" y1="243.3" x2="367.5" y2="243.3" stroke="#1a9a4a" stroke-width="1"/>
<rect x="365.05" y="237.25" width="1.6" height="1.6" fill="#e8e8e8"/>
<line x1="364.2" y1="253.8" x2="367.5" y2="253.8" stroke="#1a9a4a" stroke-width="1"/>
<rect x="365.05" y="247.75" width="1.6" height="1.6" fill="#e8e8e8"/>
<line x1="364.2" y1="264.3" x2="367.5" y2="264.3" stroke="#1a9a4a" stroke-width="1"/>
<rect x="365.05" y="258.25" width="1.6" height="1.6" fill="#e8e8e8"/>
<line x1="364.2" y1="274.8" x2="367.5" y2="274.8" stroke="#1a9a4a" stroke-width="1"/>
<rect x="365.05" y="268.75" width="1.6" height="1.6" fill="#e8e8e8"/>
<line x1="364.2" y1="285.3" x2="367.5" y2="285.3" stroke="#1a9a4a" stroke-width="1"/>
<rect x="365.05" y="279.25" width="1.6" height="1.6" fill="#e8e8e8"/>
<line x1="364.2" y1="295.8" x2="367.5" y2="295.8" stroke="#1a9a4a" stroke-width="1"/>
<rect x="365.05" y="289.75" width="1.6" height="1.6" fill="#e8e8e8"/>
<line x1="364.2" y1="306.3" x2="367.5" y2="306.3" stroke="#1a9a4a" stroke-width="1"/>
<rect x="365.05" y="300.25" width="1.6" height="1.6" fill="#e8e8e8"/>
<line x1="364.2" y1="316.8" x2="367.5" y2="316.8" stroke="#1a9a4a" stroke-width="1"/>
<rect x="365.05" y="310.75" width="1.6" height="1.6" fill="#e8e8e8"/>
<line x1="364.2" y1="327.3" x2="367.5" y2="327.3" stroke="#1a9a4a" stroke-width="1"/>
<rect x="365.05" y="321.25" width="1.6" height="1.6" fill="#e8e8e8"/>
<line x1="364.2" y1="337.8" x2="367.5" y2="337.8" stroke="#1a9a4a" stroke-width="1"/>
<rect x="365.05" y="331.75" width="1.6" height="1.6" fill="#e8e8e8"/>
<line x1="364.2" y1="348.3" x2="367.5" y2="348.3" stroke="#1a9a4a" stroke-width="1"/>
<rect x="365.05" y="342.25" width="1.6" height="1.6" fill="#e8e8e8"/>
<line x1="364.2" y1="358.8" x2="367.5" y2="358.8" stroke="#1a9a4a" stroke-width="1"/>
<rect x="365.05" y="352.75" width="1.6" height="1.6" fill="#e8e8e8"/>
<line x1="364.2" y1="369.3" x2="367.5" y2="369.3" stroke="#1a9a4a" stroke-width="1"/>
<rect x="365.05" y="363.25" width="1.6" height="1.6" fill="#e8e8e8"/>
<line x1="364.2" y1="379.8" x2="367.5" y2="379.8" stroke="#1a9a4a" stroke-width="1"/>
<rect x="365.05" y="373.75" width="1.6" height="1.6" fill="#e8e8e8"/>
<rect x="367.5" y="144.6" width="3.5" height="232.9" fill="none" stroke="#1a9a4a" stroke-width="1"/>
<line x1="367.5" y1="155.9" x2="371" y2="155.9" stroke="#1a9a4a" stroke-width="1"/>
<rect x="368.45" y="149.45" width="1.6" height="1.6" fill="#e8e8e8"/>
<line x1="367.5" y1="167.2" x2="371" y2="167.2" stroke="#1a9a4a" stroke-width="1"/>
<rect x="368.45" y="160.75" width="1.6" height="1.6" fill="#e8e8e8"/>
<line x1="367.5" y1="178.5" x2="371" y2="178.5" stroke="#1a9a4a" stroke-width="1"/>
<rect x="368.45" y="172.05" width="1.6" height="1.6" fill="#e8e8e8"/>
<line x1="367.5" y1="189.8" x2="371" y2="189.8" stroke="#1a9a4a" stroke-width="1"/>
<rect x="368.45" y="183.35" width="1.6" height="1.6" fill="#e8e8e8"/>
<line x1="367.5" y1="201.1" x2="371" y2="201.1" stroke="#1a9a4a" stroke-width="1"/>
<rect x="368.45" y="194.65" width="1.6" height="1.6" fill="#e8e8e8"/>
<line x1="367.5" y1="212.4" x2="371" y2="212.4" stroke="#1a9a4a" stroke-width="1"/>
<rect x="368.45" y="205.95" width="1.6" height="1.6" fill="#e8e8e8"/>
<line x1="367.5" y1="223.7" x2="371" y2="223.7" stroke="#1a9a4a" stroke-width="1"/>
<rect x="368.45" y="217.25" width="1.6" height="1.6" fill="#e8e8e8"/>
<line x1="367.5" y1="235" x2="371" y2="235" stroke="#1a9a4a" stroke-width="1"/>
<rect x="368.45" y="228.55" width="1.6" height="1.6" fill="#e8e8e8"/>
<line x1="367.5" y1="246.3" x2="371" y2="246.3" stroke="#1a9a4a" stroke-width="1"/>
<rect x="368.45" y="239.85" width="1.6" height="1.6" fill="#e8e8e8"/>
<line x1="367.5" y1="257.6" x2="371" y2="257.6" stroke="#1a9a4a" stroke-width="1"/>
<rect x="368.45" y="251.15" width="1.6" height="1.6" fill="#e8e8e8"/>
<line x1="367.5" y1="268.9" x2="371" y2="268.9" stroke="#1a9a4a" stroke-width="1"/>
<rect x="368.45" y="262.45" width="1.6" height="1.6" fill="#e8e8e8"/>
<line x1="367.5" y1="280.2" x2="371" y2="280.2" stroke="#1a9a4a" stroke-width="1"/>
<rect x="368.45" y="273.75" width="1.6" height="1.6" fill="#e8e8e8"/>
<line x1="367.5" y1="291.5" x2="371" y2="291.5" stroke="#1a9a4a" stroke-width="1"/>
<rect x="368.45" y="285.05" width="1.6" height="1.6" fill="#e8e8e8"/>
<line x1="367.5" y1="302.8" x2="371" y2="302.8" stroke="#1a9a4a" stroke-width="1"/>
<rect x="368.45" y="296.35" width="1.6" height="1.6" fill="#e8e8e8"/>
<line x1="367.5" y1="314.1" x2="371" y2="314.1" stroke="#1a9a4a" stroke-width="1"/>
<rect x="368.45" y="307.65" width="1.6" height="1.6" fill="#e8e8e8"/>
<line x1="367.5" y1="325.4" x2="371" y2="325.4" stroke="#1a9a4a" stroke-width="1"/>
<rect x="368.45" y="318.95" width="1.6" height="1.6" fill="#e8e8e8"/>
<line x1="367.5" y1="336.7" x2="371" y2="336.7" stroke="#1a9a4a" stroke-width="1"/>
<rect x="368.45" y="330.25" width="1.6" height="1.6" fill="#e8e8e8"/>
<line x1="367.5" y1="348" x2="371" y2="348" stroke="#1a9a4a" stroke-width="1"/>
<rect x="368.45" y="341.55" width="1.6" height="1.6" fill="#e8e8e8"/>
<line x1="367.5" y1="359.3" x2="371" y2="359.3" stroke="#1a9a4a" stroke-width="1"/>
<rect x="368.45" y="352.85" width="1.6" height="1.6" fill="#e8e8e8"/>
<line x1="367.5" y1="370.6" x2="371" y2="370.6" stroke="#1a9a4a" stroke-width="1"/>
<rect x="368.45" y="364.15" width="1.6" height="1.6" fill="#e8e8e8"/>
<rect x="371" y="144.6" width="3.5" height="232.9" fill="none" stroke="#1a9a4a" stroke-width="1"/>
<line x1="371" y1="155.9" x2="374.5" y2="155.9" stroke="#1a9a4a" stroke-width="1"/>
<line x1="371" y1="167.2" x2="374.5" y2="167.2" stroke="#1a9a4a" stroke-width="1"/>
<line x1="371" y1="178.5" x2="374.5" y2="178.5" stroke="#1a9a4a" stroke-width="1"/>
<line x1="371" y1="189.8" x2="374.5" y2="189.8" stroke="#1a9a4a" stroke-width="1"/>
<line x1="371" y1="201.1" x2="374.5" y2="201.1" stroke="#1a9a4a" stroke-width="1"/>
<line x1="371" y1="212.4" x2="374.5" y2="212.4" stroke="#1a9a4a" stroke-width="1"/>
<line x1="371" y1="223.7" x2="374.5" y2="223.7" stroke="#1a9a4a" stroke-width="1"/>
<line x1="371" y1="235" x2="374.5" y2="235" stroke="#1a9a4a" stroke-width="1"/>
<line x1="371" y1="246.3" x2="374.5" y2="246.3" stroke="#1a9a4a" stroke-width="1"/>
<line x1="371" y1="257.6" x2="374.5" y2="257.6" stroke="#1a9a4a" stroke-width="1"/>
<line x1="371" y1="268.9" x2="374.5" y2="268.9" stroke="#1a9a4a" stroke-width="1"/>
<line x1="371" y1="280.2" x2="374.5" y2="280.2" stroke="#1a9a4a" stroke-width="1"/>
<line x1="371" y1="291.5" x2="374.5" y2="291.5" stroke="#1a9a4a" stroke-width="1"/>
<line x1="371" y1="302.8" x2="374.5" y2="302.8" stroke="#1a9a4a" stroke-width="1"/>
<line x1="371" y1="314.1" x2="374.5" y2="314.1" stroke="#1a9a4a" stroke-width="1"/>
<line x1="371" y1="325.4" x2="374.5" y2="325.4" stroke="#1a9a4a" stroke-width="1"/>
<line x1="371" y1="336.7" x2="374.5" y2="336.7" stroke="#1a9a4a" stroke-width="1"/>
<line x1="371" y1="348" x2="374.5" y2="348" stroke="#1a9a4a" stroke-width="1"/>
<line x1="371" y1="359.3" x2="374.5" y2="359.3" stroke="#1a9a4a" stroke-width="1"/>
<line x1="371" y1="370.6" x2="374.5" y2="370.6" stroke="#1a9a4a" stroke-width="1"/>
<rect x="379.4" y="140.8" width="3.2" height="76.7" fill="none" stroke="#1a9a4a" stroke-width="1"/>
<line x1="379.4" y1="150.4" x2="382.6" y2="150.4" stroke="#1a9a4a" stroke-width="1"/>
<line x1="379.4" y1="161.7" x2="382.6" y2="161.7" stroke="#1a9a4a" stroke-width="1"/>
<line x1="379.4" y1="173" x2="382.6" y2="173" stroke="#1a9a4a" stroke-width="1"/>
<line x1="379.4" y1="184.3" x2="382.6" y2="184.3" stroke="#1a9a4a" stroke-width="1"/>
<line x1="379.4" y1="195.6" x2="382.6" y2="195.6" stroke="#1a9a4a" stroke-width="1"/>
<line x1="379.4" y1="206.9" x2="382.6" y2="206.9" stroke="#1a9a4a" stroke-width="1"/>
<rect x="380.1" y="144.7" width="1.8" height="1.8" fill="#e8e8e8"/>
<rect x="380.1" y="155.15" width="1.8" height="1.8" fill="#e8e8e8"/>
<rect x="380.1" y="166.45" width="1.8" height="1.8" fill="#e8e8e8"/>
<rect x="380.1" y="177.75" width="1.8" height="1.8" fill="#e8e8e8"/>
<rect x="380.1" y="189.05" width="1.8" height="1.8" fill="#e8e8e8"/>
<rect x="380.1" y="200.35" width="1.8" height="1.8" fill="#e8e8e8"/>
<rect x="380.1" y="211.3" width="1.8" height="1.8" fill="#e8e8e8"/>
<rect x="379.4" y="275.5" width="3.2" height="105.5" fill="none" stroke="#1a9a4a" stroke-width="1"/>
<line x1="379.4" y1="280.95" x2="382.6" y2="280.95" stroke="#1a9a4a" stroke-width="1"/>
<line x1="379.4" y1="292.3" x2="382.6" y2="292.3" stroke="#1a9a4a" stroke-width="1"/>
<line x1="379.4" y1="303.65" x2="382.6" y2="303.65" stroke="#1a9a4a" stroke-width="1"/>
<line x1="379.4" y1="315" x2="382.6" y2="315" stroke="#1a9a4a" stroke-width="1"/>
<line x1="379.4" y1="326.35" x2="382.6" y2="326.35" stroke="#1a9a4a" stroke-width="1"/>
<line x1="379.4" y1="337.7" x2="382.6" y2="337.7" stroke="#1a9a4a" stroke-width="1"/>
<line x1="379.4" y1="349.05" x2="382.6" y2="349.05" stroke="#1a9a4a" stroke-width="1"/>
<line x1="379.4" y1="360.4" x2="382.6" y2="360.4" stroke="#1a9a4a" stroke-width="1"/>
<line x1="379.4" y1="371.75" x2="382.6" y2="371.75" stroke="#1a9a4a" stroke-width="1"/>
<rect x="380.1" y="277.33" width="1.8" height="1.8" fill="#e8e8e8"/>
<rect x="380.1" y="285.73" width="1.8" height="1.8" fill="#e8e8e8"/>
<rect x="380.1" y="297.08" width="1.8" height="1.8" fill="#e8e8e8"/>
<rect x="380.1" y="308.43" width="1.8" height="1.8" fill="#e8e8e8"/>
<rect x="380.1" y="319.78" width="1.8" height="1.8" fill="#e8e8e8"/>
<rect x="380.1" y="331.12" width="1.8" height="1.8" fill="#e8e8e8"/>
<rect x="380.1" y="342.48" width="1.8" height="1.8" fill="#e8e8e8"/>
<rect x="380.1" y="353.83" width="1.8" height="1.8" fill="#e8e8e8"/>
<rect x="380.1" y="365.18" width="1.8" height="1.8" fill="#e8e8e8"/>
<rect x="380.1" y="375.48" width="1.8" height="1.8" fill="#e8e8e8"/>
<rect x="743.1" y="239.6" width="3.9" height="41.4" fill="none" stroke="#1a9a4a" stroke-width="1"/>
<line x1="743.1" y1="246.9" x2="747" y2="246.9" stroke="#1a9a4a" stroke-width="1"/>
<line x1="743.1" y1="258.25" x2="747" y2="258.25" stroke="#1a9a4a" stroke-width="1"/>
<line x1="743.1" y1="269.6" x2="747" y2="269.6" stroke="#1a9a4a" stroke-width="1"/>
<line x1="743.1" y1="280.95" x2="747" y2="280.95" stroke="#1a9a4a" stroke-width="1"/>
<rect x="744.15" y="242.35" width="1.8" height="1.8" fill="#e8e8e8"/>
<rect x="744.15" y="251.67" width="1.8" height="1.8" fill="#e8e8e8"/>
<rect x="744.15" y="263.03" width="1.8" height="1.8" fill="#e8e8e8"/>
<rect x="744.15" y="274.38" width="1.8" height="1.8" fill="#e8e8e8"/>
<rect x="748.8" y="243.9" width="2.7" height="32.8" fill="none" stroke="#1a9a4a" stroke-width="1"/>
<line x1="748.8" y1="260.3" x2="751.5" y2="260.3" stroke="#1a9a4a" stroke-width="1"/>
<rect x="749.35" y="251.3" width="1.6" height="1.6" fill="#e8e8e8"/>
<rect x="751.5" y="243.9" width="2.7" height="32.8" fill="none" stroke="#1a9a4a" stroke-width="1"/>
<line x1="751.5" y1="252" x2="754.2" y2="252" stroke="#1a9a4a" stroke-width="1"/>
<line x1="751.5" y1="269" x2="754.2" y2="269" stroke="#1a9a4a" stroke-width="1"/>
<rect x="751.95" y="247.05" width="1.8" height="1.8" fill="#e8e8e8"/>
<rect x="751.95" y="259.6" width="1.8" height="1.8" fill="#e8e8e8"/>
<rect x="751.95" y="271.95" width="1.8" height="1.8" fill="#e8e8e8"/>
<rect x="755" y="238.4" width="3.7" height="44.8" fill="none" stroke="#1a9a4a" stroke-width="1"/>
<line x1="755" y1="251" x2="758.7" y2="251" stroke="#1a9a4a" stroke-width="1"/>
<line x1="755" y1="260.9" x2="758.7" y2="260.9" stroke="#1a9a4a" stroke-width="1"/>
<line x1="755" y1="270.8" x2="758.7" y2="270.8" stroke="#1a9a4a" stroke-width="1"/>
<rect x="755.95" y="243.8" width="1.8" height="1.8" fill="#e8e8e8"/>
<rect x="755.95" y="255.05" width="1.8" height="1.8" fill="#e8e8e8"/>
<rect x="755.95" y="264.95" width="1.8" height="1.8" fill="#e8e8e8"/>
<rect x="755.95" y="276.1" width="1.8" height="1.8" fill="#e8e8e8"/>
<polygon points="317.5,437 348.5,445.3 348.5,449.4 317.5,457.4" fill="none" stroke="#e0e0e0" stroke-width="0.9"/>
<text x="333" y="435.5" font-family="Liberation Sans" font-size="6.4" fill="#e8e8e8" text-anchor="middle">E</text>
<text x="313.5" y="450" font-family="Liberation Sans" font-size="6.4" fill="#e8e8e8" text-anchor="middle">B</text>
<text x="353" y="450" font-family="Liberation Sans" font-size="6.4" fill="#e8e8e8" text-anchor="middle">D</text>
<text x="333.5" y="464.5" font-family="Liberation Sans" font-size="6.4" fill="#e8e8e8" text-anchor="middle">H</text>
<rect x="761.6" y="434.3" width="44" height="1.2" fill="#d8cc00"/>
<rect x="761.6" y="434.3" width="1.2" height="44" fill="#d8cc00"/>
<polygon points="795,433.4 801,434.9 795,436.4" fill="#d8cc00"/>
<polygon points="760.7,468 762.2,474 763.7,468" fill="#d8cc00"/>
<text x="808.5" y="437" font-family="Liberation Sans" font-size="5.4" fill="#d8cc00" text-anchor="middle">X</text>
<circle cx="762.2" cy="434.9" r="1.4" fill="#d8cc00"/>
</svg>
</body></html>
